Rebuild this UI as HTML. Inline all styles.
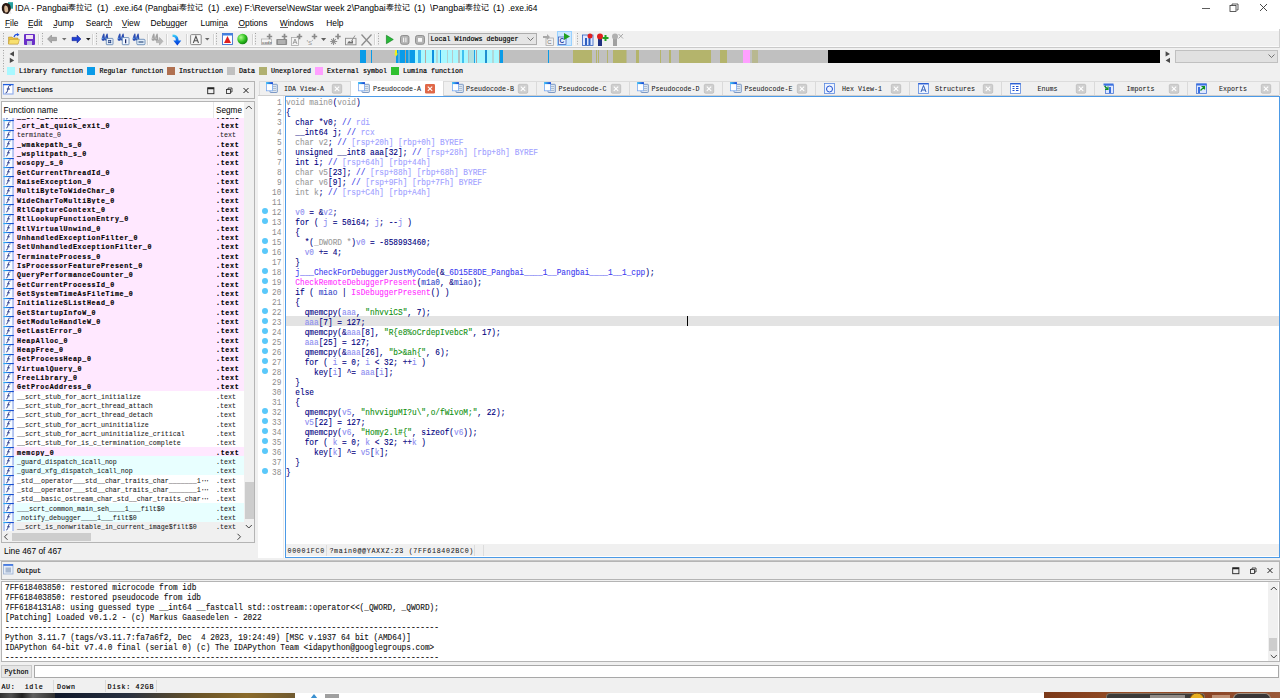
<!DOCTYPE html><html><head><meta charset="utf-8"><style>
*{box-sizing:border-box;margin:0;padding:0}
html,body{width:1280px;height:698px;overflow:hidden;background:#f0f0f0}
#root{position:relative;width:1280px;height:698px;overflow:hidden;background:#f0f0f0;font-family:"Liberation Sans",sans-serif}
.a{position:absolute}
.t{position:absolute;white-space:pre;line-height:1}
.bm{font-family:"Liberation Mono",monospace;font-size:6.67px;font-weight:bold;color:#000;-webkit-text-stroke:0.15px #000}
.rg{font-weight:normal;color:#000;-webkit-text-stroke:0.18px #000}
.rl{font-weight:normal;color:#1a1a1a;-webkit-text-stroke:0.05px #000}
.cd{font-family:"Liberation Mono",monospace;font-size:9.3px;transform:scaleX(0.8363);transform-origin:0 0;-webkit-text-stroke:0.12px currentColor}
svg{position:absolute;overflow:visible}
</style></head><body><div id="root"><div class="a" style="left:0px;top:0px;width:1280px;height:30.5px;background:#fff"></div>
<svg style="left:1px;top:1.8px" width="12" height="12" viewBox="0 0 12 12"><rect x="7" y="0.2" width="5" height="6.5" fill="#28a0a0"/><path d="M4.5 1 Q8.5 0.8 9.5 4 Q10.5 7 9 9.5 L10 11.5 L6 12 L2.5 11 Q0.3 8.5 0.8 5 Q1.5 1.5 4.5 1Z" fill="#2a1a14"/><path d="M4 3.5 Q6.5 3 7 6 L7.2 9 Q6 11 4.5 10.5 Q3 9 3.2 6 Q3.2 4 4 3.5Z" fill="#d8b898"/><path d="M7 12 L9 9 L11 12Z" fill="#f0f0f0"/></svg>
<div class="t" style="left:15.299999999999999px;top:3.8px;font-family:Liberation Sans;font-size:9px;color:#000;transform:scaleX(0.9595);transform-origin:0 0">IDA - Pangbai</div>
<div class="t" style="left:113.10000000000001px;top:3.8px;font-family:Liberation Sans;font-size:9px;color:#000;transform:scaleX(0.9377);transform-origin:0 0">.exe.i64 (Pangbai</div>
<div class="t" style="left:223.2px;top:3.8px;font-family:Liberation Sans;font-size:9px;color:#000;transform:scaleX(0.9560);transform-origin:0 0">.exe) F:\Reverse\NewStar week 2\Pangbai</div>
<div class="t" style="left:429.7px;top:3.8px;font-family:Liberation Sans;font-size:9px;color:#000;transform:scaleX(0.9879);transform-origin:0 0">\Pangbai</div>
<div class="t" style="left:508.45px;top:3.8px;font-family:Liberation Sans;font-size:9px;color:#000;transform:scaleX(0.9340);transform-origin:0 0">.exe.i64</div>
<div class="a" style="left:68.4px;top:2.6px;width:24.4px;height:11px;overflow:hidden"><div class="t" style="left:0;top:1.2px;font-size:8.1px;color:#000;letter-spacing:0">泰拉记</div></div>
<div class="a" style="left:178.8px;top:2.6px;width:24.4px;height:11px;overflow:hidden"><div class="t" style="left:0;top:1.2px;font-size:8.1px;color:#000;letter-spacing:0">泰拉记</div></div>
<div class="a" style="left:386px;top:2.6px;width:24.4px;height:11px;overflow:hidden"><div class="t" style="left:0;top:1.2px;font-size:8.1px;color:#000;letter-spacing:0">泰拉记</div></div>
<div class="a" style="left:464.6px;top:2.6px;width:24.4px;height:11px;overflow:hidden"><div class="t" style="left:0;top:1.2px;font-size:8.1px;color:#000;letter-spacing:0">泰拉记</div></div>
<div class="t" style="left:97.1px;top:3.8px;font-family:Liberation Sans;font-size:9px;color:#000;transform:scaleX(1.0364);transform-origin:0 0">(1)</div>
<div class="t" style="left:207.5px;top:3.8px;font-family:Liberation Sans;font-size:9px;color:#000;transform:scaleX(1.0364);transform-origin:0 0">(1)</div>
<div class="t" style="left:413.8px;top:3.8px;font-family:Liberation Sans;font-size:9px;color:#000;transform:scaleX(1.0364);transform-origin:0 0">(1)</div>
<div class="t" style="left:492.90000000000003px;top:3.8px;font-family:Liberation Sans;font-size:9px;color:#000;transform:scaleX(1.0364);transform-origin:0 0">(1)</div>
<svg style="left:1200px;top:2px" width="80" height="12"><line x1="2" y1="6.5" x2="10" y2="6.5" stroke="#333" stroke-width="0.8"/><rect x="30" y="3.5" width="6" height="6" fill="none" stroke="#333" stroke-width="0.8"/><path d="M32 3.5 V2 H38 V8 H36.5" fill="none" stroke="#333" stroke-width="0.8"/><path d="M60 2 L67 9 M67 2 L60 9" stroke="#333" stroke-width="0.9"/></svg>
<div class="t" style="left:5px;top:19.0px;font-size:8.4px;color:#000">File</div>
<div class="t" style="left:28px;top:19.0px;font-size:8.4px;color:#000">Edit</div>
<div class="t" style="left:53.5px;top:19.0px;font-size:8.4px;color:#000">Jump</div>
<div class="t" style="left:85.8px;top:19.0px;font-size:8.4px;color:#000">Search</div>
<div class="t" style="left:121.8px;top:19.0px;font-size:8.4px;color:#000">View</div>
<div class="t" style="left:150.5px;top:19.0px;font-size:8.4px;color:#000">Debugger</div>
<div class="t" style="left:200.5px;top:19.0px;font-size:8.4px;color:#000">Lumina</div>
<div class="t" style="left:238.5px;top:19.0px;font-size:8.4px;color:#000">Options</div>
<div class="t" style="left:279.8px;top:19.0px;font-size:8.4px;color:#000">Windows</div>
<div class="t" style="left:326.2px;top:19.0px;font-size:8.4px;color:#000">Help</div>
<div class="a" style="left:5px;top:27.2px;width:4.5px;height:0.9px;background:#666"></div>
<div class="a" style="left:28px;top:27.2px;width:5px;height:0.9px;background:#666"></div>
<div class="a" style="left:53px;top:27.2px;width:4px;height:0.9px;background:#666"></div>
<div class="a" style="left:106px;top:27.2px;width:5px;height:0.9px;background:#666"></div>
<div class="a" style="left:121.8px;top:27.2px;width:5.200000000000003px;height:0.9px;background:#666"></div>
<div class="a" style="left:166.2px;top:27.2px;width:4.800000000000011px;height:0.9px;background:#666"></div>
<div class="a" style="left:218.7px;top:27.2px;width:4.900000000000006px;height:0.9px;background:#666"></div>
<div class="a" style="left:238.4px;top:27.2px;width:6.199999999999989px;height:0.9px;background:#666"></div>
<div class="a" style="left:280px;top:27.2px;width:7.5px;height:0.9px;background:#666"></div>
<div class="a" style="left:0px;top:46.3px;width:1280px;height:1px;background:#fafafa"></div>
<div class="a" style="left:0px;top:47.2px;width:1280px;height:1px;background:#cacaca"></div>
<div class="a" style="left:1279px;top:29px;width:1px;height:19px;background:#d0d0d0"></div>
<svg style="left:3px;top:33px" width="2" height="13"><rect x="0" y="0.0" width="1" height="1" fill="#a0a0a0"/><rect x="0" y="2.6" width="1" height="1" fill="#a0a0a0"/><rect x="0" y="5.2" width="1" height="1" fill="#a0a0a0"/><rect x="0" y="7.800000000000001" width="1" height="1" fill="#a0a0a0"/><rect x="0" y="10.4" width="1" height="1" fill="#a0a0a0"/></svg>
<svg style="left:8px;top:33px" width="12" height="12" viewBox="0 0 12 12"><path d="M0.5 4 H4 L5 5 H10 V11 H0.5Z" fill="#e8c040" stroke="#b08820" stroke-width="0.5"/><path d="M1.5 6.5 H11.5 L10 11 H0.5Z" fill="#f8e070" stroke="#c09830" stroke-width="0.5"/><path d="M6 4 Q7 1 10 1.5" stroke="#2050e0" stroke-width="1.2" fill="none"/><path d="M9 0 L11.5 1.7 L9 3.3Z" fill="#2050e0"/></svg>
<svg style="left:24px;top:34px" width="11" height="11" viewBox="0 0 11 11"><rect x="0" y="0" width="11" height="11" rx="1" fill="#6a30c8"/><rect x="2" y="1" width="7" height="4" fill="#f0e0f0"/><rect x="3" y="7" width="5" height="4" fill="#c0c0e0"/></svg>
<div class="a" style="left:38px;top:33.5px;width:0.9px;height:11.5px;background:#d4d4d4"></div>
<div class="a" style="left:38.9px;top:33.5px;width:0.7px;height:11.5px;background:#fbfbfb"></div>
<svg style="left:42px;top:33px" width="2" height="13"><rect x="0" y="0.0" width="1" height="1" fill="#a0a0a0"/><rect x="0" y="2.6" width="1" height="1" fill="#a0a0a0"/><rect x="0" y="5.2" width="1" height="1" fill="#a0a0a0"/><rect x="0" y="7.800000000000001" width="1" height="1" fill="#a0a0a0"/><rect x="0" y="10.4" width="1" height="1" fill="#a0a0a0"/></svg>
<svg style="left:47px;top:34px" width="10" height="10" viewBox="0 0 10 10"><path d="M0.5 5 L4.5 1 V3.3 H9.5 V6.7 H4.5 V9Z" fill="#a8a8a8" stroke="#808080" stroke-width="0.5"/></svg>
<svg style="left:62px;top:38px" width="5" height="3"><path d="M0 0 H4.5 L2.25 2.6Z" fill="#707070"/></svg>
<svg style="left:71px;top:34px" width="11" height="10" viewBox="0 0 10 10"><path d="M9.5 5 L5.5 1 V3.3 H0.5 V6.7 H5.5 V9Z" fill="#2040d0" stroke="#102090" stroke-width="0.5"/></svg>
<svg style="left:86px;top:38px" width="5" height="3"><path d="M0 0 H4.5 L2.25 2.6Z" fill="#202020"/></svg>
<div class="a" style="left:92px;top:33.5px;width:0.9px;height:11.5px;background:#d4d4d4"></div>
<div class="a" style="left:92.9px;top:33.5px;width:0.7px;height:11.5px;background:#fbfbfb"></div>
<svg style="left:96px;top:33px" width="2" height="13"><rect x="0" y="0.0" width="1" height="1" fill="#a0a0a0"/><rect x="0" y="2.6" width="1" height="1" fill="#a0a0a0"/><rect x="0" y="5.2" width="1" height="1" fill="#a0a0a0"/><rect x="0" y="7.800000000000001" width="1" height="1" fill="#a0a0a0"/><rect x="0" y="10.4" width="1" height="1" fill="#a0a0a0"/></svg>
<svg style="left:101px;top:33px" width="13" height="13" viewBox="0 0 13 13"><path d="M2.6 0.6 C1.6 2 0.6 5 0.6 6.2 C0.6 7.3 1.5 7.8 2.4 7.8 C3.4 7.8 4 7 4 6 L3.4 0.8Z" fill="#2a4cb0"/><circle cx="1.8" cy="5.2" r="0.8" fill="#60a0f0"/><path d="M5.9 0.6 C4.9 2 3.9 5 3.9 6.2 C3.9 7.3 4.8 7.8 5.699999999999999 7.8 C6.699999999999999 7.8 7.3 7 7.3 6 L6.699999999999999 0.8Z" fill="#2a4cb0"/><circle cx="5.1" cy="5.2" r="0.8" fill="#60a0f0"/><rect x="5.3" y="5.4" width="6.7" height="6.3" rx="0.6" fill="#e8f0fa" stroke="#5a80b0" stroke-width="0.8"/><path d="M7.2 7.6 h3 M7.2 9.5 h3 M7.8 7 v3.2 M9.6 7 v3.2" stroke="#203e80" stroke-width="0.8"/></svg>
<svg style="left:117px;top:33px" width="13" height="13" viewBox="0 0 13 13"><path d="M2.6 0.6 C1.6 2 0.6 5 0.6 6.2 C0.6 7.3 1.5 7.8 2.4 7.8 C3.4 7.8 4 7 4 6 L3.4 0.8Z" fill="#2a4cb0"/><circle cx="1.8" cy="5.2" r="0.8" fill="#60a0f0"/><path d="M5.9 0.6 C4.9 2 3.9 5 3.9 6.2 C3.9 7.3 4.8 7.8 5.699999999999999 7.8 C6.699999999999999 7.8 7.3 7 7.3 6 L6.699999999999999 0.8Z" fill="#2a4cb0"/><circle cx="5.1" cy="5.2" r="0.8" fill="#60a0f0"/><rect x="5.3" y="4.6" width="6.7" height="7.1" rx="0.6" fill="#f4f8ff" stroke="#5a80b0" stroke-width="0.8"/><path d="M8.65 6.3 v4" stroke="#102060" stroke-width="1.2"/></svg>
<svg style="left:132px;top:33px" width="13" height="13" viewBox="0 0 13 13"><path d="M2.6 0.6 C1.6 2 0.6 5 0.6 6.2 C0.6 7.3 1.5 7.8 2.4 7.8 C3.4 7.8 4 7 4 6 L3.4 0.8Z" fill="#2a4cb0"/><circle cx="1.8" cy="5.2" r="0.8" fill="#60a0f0"/><path d="M5.9 0.6 C4.9 2 3.9 5 3.9 6.2 C3.9 7.3 4.8 7.8 5.699999999999999 7.8 C6.699999999999999 7.8 7.3 7 7.3 6 L6.699999999999999 0.8Z" fill="#2a4cb0"/><circle cx="5.1" cy="5.2" r="0.8" fill="#60a0f0"/><rect x="4.8" y="6.3" width="8.2" height="5.4" rx="1" fill="#e0ecf8" stroke="#5a80b0" stroke-width="0.8"/><path d="M6.5 9 h5" stroke="#305080" stroke-width="1.2"/></svg>
<div class="a" style="left:147px;top:33.5px;width:0.9px;height:11.5px;background:#d4d4d4"></div>
<div class="a" style="left:147.9px;top:33.5px;width:0.7px;height:11.5px;background:#fbfbfb"></div>
<svg style="left:151px;top:33px" width="13" height="13" viewBox="0 0 13 13"><path d="M2.6 0.6 C1.6 2 0.6 5 0.6 6.2 C0.6 7.3 1.5 7.8 2.4 7.8 C3.4 7.8 4 7 4 6 L3.4 0.8Z" fill="#a0a0a0"/><circle cx="1.8" cy="5.2" r="0.8" fill="#c8c8c8"/><path d="M5.9 0.6 C4.9 2 3.9 5 3.9 6.2 C3.9 7.3 4.8 7.8 5.699999999999999 7.8 C6.699999999999999 7.8 7.3 7 7.3 6 L6.699999999999999 0.8Z" fill="#a0a0a0"/><circle cx="5.1" cy="5.2" r="0.8" fill="#c8c8c8"/><path d="M5.5 7 h3 v-2.5 l3.5 3.8 l-3.5 3.8 v-2.5 h-3z" fill="#b8b8b8" stroke="#9a9a9a" stroke-width="0.5"/></svg>
<div class="a" style="left:166px;top:33.5px;width:0.9px;height:11.5px;background:#d4d4d4"></div>
<div class="a" style="left:166.9px;top:33.5px;width:0.7px;height:11.5px;background:#fbfbfb"></div>
<svg style="left:171.5px;top:33.5px" width="10" height="12" viewBox="0 0 10 12"><defs><linearGradient id="dg" x1="0" y1="0" x2="0" y2="1"><stop offset="0" stop-color="#40d8f8"/><stop offset="0.5" stop-color="#1070f0"/><stop offset="1" stop-color="#0030d0"/></linearGradient></defs><path d="M0.5 0.5 Q6 0.5 6.5 5.5 L6.5 6.5 H9.3 L5.3 11.5 L1.3 6.5 H3.8 V5.8 Q3.6 3 0.5 2.8Z" fill="url(#dg)"/></svg>
<div class="a" style="left:186px;top:33.5px;width:0.9px;height:11.5px;background:#d4d4d4"></div>
<div class="a" style="left:186.9px;top:33.5px;width:0.7px;height:11.5px;background:#fbfbfb"></div>
<svg style="left:190px;top:33.8px" width="20" height="11" viewBox="0 0 20 11"><rect x="0.6" y="0.6" width="10.6" height="10" rx="1" fill="#f6f6f6" stroke="#8a8a8a" stroke-width="1"/><path d="M3.3 9 L5.9 2.3 L8.5 9 M4.3 6.7 H7.5" stroke="#555" stroke-width="1.1" fill="none"/><path d="M15 4 H19.5 L17.25 6.6Z" fill="#666"/></svg>
<div class="a" style="left:213px;top:33.5px;width:0.9px;height:11.5px;background:#d4d4d4"></div>
<div class="a" style="left:213.9px;top:33.5px;width:0.7px;height:11.5px;background:#fbfbfb"></div>
<svg style="left:216px;top:33px" width="2" height="13"><rect x="0" y="0.0" width="1" height="1" fill="#a0a0a0"/><rect x="0" y="2.6" width="1" height="1" fill="#a0a0a0"/><rect x="0" y="5.2" width="1" height="1" fill="#a0a0a0"/><rect x="0" y="7.800000000000001" width="1" height="1" fill="#a0a0a0"/><rect x="0" y="10.4" width="1" height="1" fill="#a0a0a0"/></svg>
<svg style="left:222px;top:33px" width="11" height="12" viewBox="0 0 11 12"><rect x="0.5" y="0.5" width="10" height="11" fill="#fff" stroke="#4070d0" stroke-width="0.9"/><rect x="0.5" y="0.5" width="10" height="2" fill="#4080e0"/><path d="M2 10 L5.5 3 L9 10Z" fill="#e02020"/></svg>
<svg style="left:237px;top:33px" width="11" height="12" viewBox="0 0 11 12"><defs><radialGradient id="gg" cx="0.35" cy="0.35" r="0.7"><stop offset="0" stop-color="#b0ff90"/><stop offset="0.6" stop-color="#30c020"/><stop offset="1" stop-color="#108010"/></radialGradient></defs><circle cx="5.5" cy="6" r="5.2" fill="url(#gg)"/></svg>
<div class="a" style="left:252px;top:33.5px;width:0.9px;height:11.5px;background:#d4d4d4"></div>
<div class="a" style="left:252.9px;top:33.5px;width:0.7px;height:11.5px;background:#fbfbfb"></div>
<svg style="left:255px;top:33px" width="2" height="13"><rect x="0" y="0.0" width="1" height="1" fill="#a0a0a0"/><rect x="0" y="2.6" width="1" height="1" fill="#a0a0a0"/><rect x="0" y="5.2" width="1" height="1" fill="#a0a0a0"/><rect x="0" y="7.800000000000001" width="1" height="1" fill="#a0a0a0"/><rect x="0" y="10.4" width="1" height="1" fill="#a0a0a0"/></svg>
<svg style="left:260.5px;top:33px" width="12" height="13" viewBox="0 0 12 13"><rect x="0.5" y="6" width="10" height="5.5" fill="#f4f4f4" stroke="#a8a8a8" stroke-width="0.7"/><text x="1" y="10.6" font-size="4.2" font-family="Liberation Mono" font-weight="bold" fill="#707070">code</text><path d="M8.5 0.8 v5.4 M5.8 3.5 h5.4" stroke="#8a8a8a" stroke-width="1.7"/></svg>
<svg style="left:275.5px;top:33px" width="12" height="13" viewBox="0 0 12 13"><rect x="0.3" y="6" width="10.8" height="6" rx="0.8" fill="#8c8c8c"/><path d="M2 8 h7.5 M2 10 h7.5" stroke="#e8e8e8" stroke-width="0.8"/><path d="M8.5 0.8 v5.4 M5.8 3.5 h5.4" stroke="#8a8a8a" stroke-width="1.7"/></svg>
<svg style="left:291px;top:33px" width="12" height="13" viewBox="0 0 12 13"><rect x="0.5" y="4.5" width="7" height="8" fill="#f4f4f4" stroke="#a0a0a0" stroke-width="0.7"/><path d="M2 11 L4 6 L6 11 M2.8 9.3 H5.2" stroke="#808080" stroke-width="0.7" fill="none"/><path d="M8.5 0.8 v5.4 M5.8 3.5 h5.4" stroke="#8a8a8a" stroke-width="1.7"/></svg>
<svg style="left:306px;top:33px" width="12" height="13" viewBox="0 0 12 13"><text x="2" y="11.5" font-size="6" font-family="Liberation Sans" fill="#909090">S</text><circle cx="1.3" cy="7.8" r="0.6" fill="#909090"/><circle cx="6.3" cy="7.3" r="0.5" fill="#909090"/><path d="M8.5 0.8 v5.4 M5.8 3.5 h5.4" stroke="#8a8a8a" stroke-width="1.7"/></svg>
<svg style="left:321px;top:38px" width="6" height="4"><path d="M0 0 H5.2 L2.6 3Z" fill="#606060"/></svg>
<svg style="left:330px;top:33px" width="12" height="13" viewBox="0 0 12 13"><path d="M3.5 5 v7 M0.2 8.5 h7 M1.2 6.2 L5.8 10.8 M5.8 6.2 L1.2 10.8" stroke="#909090" stroke-width="1.1"/><path d="M8 0.8 v5.4 M5.3 3.5 h5.4" stroke="#8a8a8a" stroke-width="1.7"/></svg>
<svg style="left:345px;top:33px" width="12" height="13" viewBox="0 0 12 13"><rect x="0.5" y="5.3" width="10.5" height="6.5" fill="#f0f0f0" stroke="#8a8a8a" stroke-width="0.9"/><path d="M2 10.5 L4 8 L6 9 L8 7 V10.5Z" fill="#707070"/><path d="M6.5 8 L10 2.5" stroke="#909090" stroke-width="1"/></svg>
<svg style="left:361px;top:33.5px" width="11" height="12" viewBox="0 0 11 12"><path d="M0.5 0.5 L10.5 11.5 M10.5 0.5 L0.5 11.5" stroke="#8c8c8c" stroke-width="1.3"/></svg>
<div class="a" style="left:374px;top:33.5px;width:0.9px;height:11.5px;background:#d4d4d4"></div>
<div class="a" style="left:374.9px;top:33.5px;width:0.7px;height:11.5px;background:#fbfbfb"></div>
<svg style="left:378px;top:33px" width="2" height="13"><rect x="0" y="0.0" width="1" height="1" fill="#a0a0a0"/><rect x="0" y="2.6" width="1" height="1" fill="#a0a0a0"/><rect x="0" y="5.2" width="1" height="1" fill="#a0a0a0"/><rect x="0" y="7.800000000000001" width="1" height="1" fill="#a0a0a0"/><rect x="0" y="10.4" width="1" height="1" fill="#a0a0a0"/></svg>
<svg style="left:385.8px;top:35.2px" width="8" height="9" viewBox="0 0 8 9"><path d="M0.4 0.3 L7.3 4.5 L0.4 8.7Z" fill="#28b838" stroke="#0a7a1a" stroke-width="0.6"/></svg>
<svg style="left:400px;top:34.5px" width="9.5" height="9.8" viewBox="0 0 9.5 9.8"><rect x="0.5" y="0.5" width="8.5" height="8.8" rx="2" fill="#b4b4b4" stroke="#808080" stroke-width="0.8"/><path d="M3.6 2.6 v4.6 M5.9 2.6 v4.6" stroke="#fafafa" stroke-width="1"/></svg>
<svg style="left:415px;top:34.5px" width="10" height="9.8" viewBox="0 0 10 9.8"><rect x="0.5" y="0.5" width="9" height="8.8" rx="2" fill="#b4b4b4" stroke="#808080" stroke-width="0.8"/><rect x="3" y="3" width="4" height="3.8" fill="#fafafa"/></svg>
<div class="a" style="left:428.2px;top:32.8px;width:108.6px;height:12.7px;background:#e5e5e5;border:1px solid #adadad"></div>
<div class="t bm rg" style="left:430.5px;top:36.2px;">Local Windows debugger</div>
<svg style="left:527px;top:37px" width="8" height="5"><path d="M0.5 0.5 L3.5 3.5 L6.5 0.5" stroke="#555" stroke-width="0.8" fill="none"/></svg>
<svg style="left:542px;top:33px" width="12" height="13" viewBox="0 0 12 13"><rect x="4" y="5" width="7.5" height="7.5" fill="#f0f0f0" stroke="#a0a0a0" stroke-width="0.7"/><text x="5.3" y="11" font-size="6" font-family="Liberation Sans" fill="#707070">C</text><path d="M1 3 h4 v-2 l3 3 l-3 3 v-2 h-4z" fill="#a8a8a8"/></svg>
<div class="a" style="left:556.6px;top:31px;width:15.4px;height:15px;background:#cce8ff;border:1px solid #99d1ff"></div>
<svg style="left:558px;top:32px" width="13" height="13" viewBox="0 0 13 13"><rect x="0.5" y="5" width="7.5" height="7.5" fill="#e8f0ff" stroke="#3050b0" stroke-width="0.7"/><text x="1.6" y="11.2" font-size="6.5" font-weight="bold" font-family="Liberation Sans" fill="#2040a0">C</text><path d="M6 1 L12 4.5 L6 8Z" fill="#20a020"/></svg>
<div class="a" style="left:573.5px;top:33.5px;width:0.9px;height:11.5px;background:#d4d4d4"></div>
<div class="a" style="left:574.4px;top:33.5px;width:0.7px;height:11.5px;background:#fbfbfb"></div>
<svg style="left:577px;top:33px" width="2" height="13"><rect x="0" y="0.0" width="1" height="1" fill="#a0a0a0"/><rect x="0" y="2.6" width="1" height="1" fill="#a0a0a0"/><rect x="0" y="5.2" width="1" height="1" fill="#a0a0a0"/><rect x="0" y="7.800000000000001" width="1" height="1" fill="#a0a0a0"/><rect x="0" y="10.4" width="1" height="1" fill="#a0a0a0"/></svg>
<svg style="left:582px;top:33px" width="12" height="13" viewBox="0 0 12 13"><rect x="0.5" y="2" width="10.5" height="10.5" fill="#dfe8ff" stroke="#3060c0" stroke-width="0.8"/><rect x="3" y="5" width="2" height="7" fill="#3060c0"/><rect x="6.5" y="5" width="2" height="7" fill="#3060c0"/><circle cx="8" cy="3" r="2.5" fill="#e02020"/></svg>
<svg style="left:597px;top:33px" width="12" height="13" viewBox="0 0 12 13"><rect x="1" y="4" width="4" height="9" fill="#203080"/><circle cx="3" cy="3.5" r="3" fill="#e02020"/><path d="M8.5 2 v6 M5.5 5 h6" stroke="#20a020" stroke-width="2"/></svg>
<svg style="left:612px;top:33px" width="12" height="13" viewBox="0 0 12 13"><rect x="1" y="4" width="4" height="9" fill="#a0a0a0"/><circle cx="3" cy="3.5" r="3" fill="#b0b0b0"/><path d="M6.5 1 L11 5.5 M11 1 L6.5 5.5" stroke="#a0a0a0" stroke-width="0.9"/></svg>
<svg style="left:3px;top:50px" width="2" height="24"><rect x="0" y="0.0" width="1" height="1" fill="#a0a0a0"/><rect x="0" y="2.6" width="1" height="1" fill="#a0a0a0"/><rect x="0" y="5.2" width="1" height="1" fill="#a0a0a0"/><rect x="0" y="7.800000000000001" width="1" height="1" fill="#a0a0a0"/><rect x="0" y="10.4" width="1" height="1" fill="#a0a0a0"/><rect x="0" y="13.0" width="1" height="1" fill="#a0a0a0"/><rect x="0" y="15.600000000000001" width="1" height="1" fill="#a0a0a0"/><rect x="0" y="18.2" width="1" height="1" fill="#a0a0a0"/><rect x="0" y="20.8" width="1" height="1" fill="#a0a0a0"/></svg>
<svg style="left:9px;top:51px" width="6" height="13"><path d="M5 0.3 V5.5 L0.6 2.9Z M0.8 6.8 V12 L5.2 9.4Z" fill="#4a4a4a"/></svg>
<div class="a" style="left:18px;top:50px;width:810px;height:13px;background:#c0c0c0"></div>
<div class="a" style="left:360px;top:50px;width:5.5px;height:13px;background:#0a9be8"></div>
<div class="a" style="left:370.8px;top:50px;width:1.2px;height:13px;background:#0a9be8"></div>
<div class="a" style="left:395.6px;top:50px;width:2.4px;height:13px;background:#0a9be8"></div>
<div class="a" style="left:398px;top:50px;width:2px;height:13px;background:#50b0e0"></div>
<div class="a" style="left:400px;top:50px;width:5px;height:13px;background:#0a9be8"></div>
<div class="a" style="left:405px;top:50px;width:1px;height:13px;background:#b0a090"></div>
<div class="a" style="left:406px;top:50px;width:2px;height:13px;background:#0a9be8"></div>
<div class="a" style="left:408px;top:50px;width:2px;height:13px;background:#50b0e0"></div>
<div class="a" style="left:410px;top:50px;width:5px;height:13px;background:#0a9be8"></div>
<div class="a" style="left:415px;top:50px;width:2.6px;height:13px;background:#a8f8ff"></div>
<div class="a" style="left:417.6px;top:50px;width:3.4px;height:13px;background:#40b8f0"></div>
<div class="a" style="left:421px;top:50px;width:4px;height:13px;background:#a8f8ff"></div>
<div class="a" style="left:425px;top:50px;width:1px;height:13px;background:#b8a8a0"></div>
<div class="a" style="left:426px;top:50px;width:5.7px;height:13px;background:#a8f8ff"></div>
<div class="a" style="left:431.7px;top:50px;width:1.9px;height:13px;background:#1090e0"></div>
<div class="a" style="left:433.6px;top:50px;width:2.4px;height:13px;background:#a8f8ff"></div>
<div class="a" style="left:436px;top:50px;width:2px;height:13px;background:#b0d8d8"></div>
<div class="a" style="left:438px;top:50px;width:1.7px;height:13px;background:#a8f8ff"></div>
<div class="a" style="left:439.7px;top:50px;width:1.3px;height:13px;background:#20a0e8"></div>
<div class="a" style="left:441px;top:50px;width:5.7px;height:13px;background:#a8f8ff"></div>
<div class="a" style="left:446.7px;top:50px;width:1.3px;height:13px;background:#b0d0d0"></div>
<div class="a" style="left:448px;top:50px;width:4px;height:13px;background:#a8f8ff"></div>
<div class="a" style="left:452px;top:50px;width:1.3px;height:13px;background:#b8c8c8"></div>
<div class="a" style="left:453.3px;top:50px;width:4.7px;height:13px;background:#a8f8ff"></div>
<div class="a" style="left:458px;top:50px;width:1.5px;height:13px;background:#b0c0c0"></div>
<div class="a" style="left:459.5px;top:50px;width:2.5px;height:13px;background:#a8f8ff"></div>
<div class="a" style="left:462px;top:50px;width:2px;height:13px;background:#40c0f0"></div>
<div class="a" style="left:464px;top:50px;width:3.8px;height:13px;background:#a8f8ff"></div>
<div class="a" style="left:467.8px;top:50px;width:1.4px;height:13px;background:#b8c0c0"></div>
<div class="a" style="left:469.2px;top:50px;width:4.8px;height:13px;background:#b0e0e0"></div>
<div class="a" style="left:474px;top:50px;width:1px;height:13px;background:#20a0e8"></div>
<div class="a" style="left:475px;top:50px;width:1.2px;height:13px;background:#a8f8ff"></div>
<div class="a" style="left:476.2px;top:50px;width:1.0px;height:13px;background:#b0a0a0"></div>
<div class="a" style="left:477.2px;top:50px;width:7.8px;height:13px;background:#a8f8ff"></div>
<div class="a" style="left:485px;top:50px;width:2px;height:13px;background:#2090d0"></div>
<div class="a" style="left:487px;top:50px;width:5px;height:13px;background:#a8f8ff"></div>
<div class="a" style="left:492px;top:50px;width:2px;height:13px;background:#b0d8d8"></div>
<div class="a" style="left:494px;top:50px;width:5px;height:13px;background:#a8f8ff"></div>
<div class="a" style="left:499px;top:50px;width:1px;height:13px;background:#b09080"></div>
<div class="a" style="left:500px;top:50px;width:3px;height:13px;background:#0a9be8"></div>
<div class="a" style="left:547.7px;top:50px;width:1.3px;height:13px;background:#0a9be8"></div>
<div class="a" style="left:573.4px;top:50px;width:18.6px;height:13px;background:#b4b46c"></div>
<div class="a" style="left:595.6px;top:50px;width:1.4px;height:13px;background:#b4b46c"></div>
<div class="a" style="left:597.6px;top:50px;width:1.2px;height:13px;background:#b4b46c"></div>
<div class="a" style="left:607px;top:50px;width:1px;height:13px;background:#b4b46c"></div>
<div class="a" style="left:613px;top:50px;width:12.8px;height:13px;background:#b4b46c"></div>
<div class="a" style="left:625.8px;top:50px;width:1.7px;height:13px;background:#b8b898"></div>
<div class="a" style="left:636px;top:50px;width:3px;height:13px;background:#b4b46c"></div>
<div class="a" style="left:660px;top:50px;width:1.4px;height:13px;background:#b4b46c"></div>
<div class="a" style="left:668.75px;top:50px;width:2.25px;height:13px;background:#b4b46c"></div>
<div class="a" style="left:679px;top:50px;width:32px;height:13px;background:#b4b46c"></div>
<div class="a" style="left:720px;top:50px;width:7px;height:13px;background:#b4b46c"></div>
<div class="a" style="left:743px;top:50px;width:7px;height:13px;background:#ffa0ff"></div>
<div class="a" style="left:752px;top:50px;width:6px;height:13px;background:#b8b890"></div>
<div class="a" style="left:828px;top:50px;width:332px;height:13px;background:#000"></div>
<svg style="left:394px;top:50px" width="4" height="7"><path d="M1 0 h2 v3.5 h1 L2 6.5 L0 3.5 h1z" fill="#f0f020"/></svg>
<svg style="left:1165px;top:51px" width="6" height="13"><path d="M0.6 0.3 V5.5 L5 2.9Z M5 6.8 V12 L0.6 9.4Z" fill="#4a4a4a"/></svg>
<div class="a" style="left:1174.5px;top:50px;width:103.2px;height:13px;background:#e1e1e1;border:1px solid #c0c0c0"></div>
<svg style="left:1268px;top:54px" width="8" height="5"><path d="M0.5 0.5 L3.5 3.5 L6.5 0.5" stroke="#555" stroke-width="0.8" fill="none"/></svg>
<div class="a" style="left:7.3px;top:67px;width:8px;height:8px;background:#a8f8ff"></div>
<div class="t bm rg" style="left:19px;top:68.3px;">Library function</div>
<div class="a" style="left:87px;top:67px;width:8px;height:8px;background:#0a9be8"></div>
<div class="t bm rg" style="left:99.4px;top:68.3px;">Regular function</div>
<div class="a" style="left:167px;top:67px;width:8px;height:8px;background:#b07050"></div>
<div class="t bm rg" style="left:179px;top:68.3px;">Instruction</div>
<div class="a" style="left:227px;top:67px;width:8px;height:8px;background:#c0c0c0"></div>
<div class="t bm rg" style="left:239px;top:68.3px;">Data</div>
<div class="a" style="left:259px;top:67px;width:8px;height:8px;background:#b0b070"></div>
<div class="t bm rg" style="left:271px;top:68.3px;">Unexplored</div>
<div class="a" style="left:315px;top:67px;width:8px;height:8px;background:#ffa0ff"></div>
<div class="t bm rg" style="left:327px;top:68.3px;">External symbol</div>
<div class="a" style="left:391px;top:67px;width:8px;height:8px;background:#30c030"></div>
<div class="t bm rg" style="left:403px;top:68.3px;">Lumina function</div>
<div class="a" style="left:1px;top:80.5px;width:254px;height:18.5px;background:#f0f0f0;border:1px solid #b4b4b4;border-width:1px 1.5px 1.5px 1px"></div>
<svg style="left:2.5px;top:84px" width="10.5" height="10.5" viewBox="0 0 10.5 10.5"><rect x="0.5" y="0.5" width="9.5" height="9.5" fill="#fff" stroke="#94b0ee" stroke-width="1.2"/><path d="M0 0.6 H10.5" stroke="#1e5ee0" stroke-width="1.2"/><path d="M2.6 9 Q4 9.2 4.6 6.5 L5.6 2.5 Q6.2 1.3 7.8 1.6 M3.8 5 H7" stroke="#14287a" stroke-width="0.9" fill="none"/></svg>
<div class="t bm rg" style="left:17px;top:86.8px;">Functions</div>
<svg style="left:207px;top:87px" width="45" height="8"><rect x="0.7" y="0.7" width="6.2" height="6" fill="none" stroke="#222" stroke-width="0.9"/><path d="M0.7 1.6 H6.9" stroke="#222" stroke-width="1.3"/><rect x="19.5" y="2.5" width="4" height="4" fill="none" stroke="#222" stroke-width="0.8"/><path d="M21 2.5 V1 H25 V5 H23.5" fill="none" stroke="#222" stroke-width="0.8"/><path d="M36.5 1 L41.5 6 M41.5 1 L36.5 6" stroke="#222" stroke-width="1"/></svg>
<div class="a" style="left:1px;top:101px;width:254px;height:441.5px;background:#f0f0f0;border:1px solid #b4b4b4;border-width:1px 1.5px 1.5px 1px"></div>
<div class="a" style="left:2px;top:102px;width:241.8px;height:16.4px;background:#fff"></div>
<div class="a" style="left:212.9px;top:102px;width:0.8px;height:16.4px;background:#e8e8e8"></div>
<div class="t" style="left:3.6px;top:106.5px;font-size:8.2px;color:#000">Function name</div>
<div class="t" style="left:216px;top:106.5px;font-size:8.2px;color:#000">Segme</div>
<div class="a" style="left:243.8px;top:102px;width:10.2px;height:429px;background:#f0f0f0"></div>
<svg style="left:245px;top:105px" width="8" height="5"><path d="M0.8 4 L3.8 1 L6.8 4" stroke="#404040" stroke-width="1" fill="none"/></svg>
<svg style="left:245px;top:523.5px" width="8" height="5"><path d="M0.8 1 L3.8 4 L6.8 1" stroke="#404040" stroke-width="1" fill="none"/></svg>
<div class="a" style="left:244.5px;top:481.5px;width:9px;height:37.8px;background:#cdcdcd"></div>
<div class="a" style="left:2px;top:530.7px;width:241.8px;height:11.3px;background:#f0f0f0"></div>
<div class="a" style="left:12px;top:532.5px;width:79px;height:8px;background:#cdcdcd"></div>
<svg style="left:3px;top:533px" width="6" height="8"><path d="M4.5 0.8 L1.5 3.8 L4.5 6.8" stroke="#404040" stroke-width="1" fill="none"/></svg>
<svg style="left:235.5px;top:533px" width="6" height="8"><path d="M1.5 0.8 L4.5 3.8 L1.5 6.8" stroke="#404040" stroke-width="1" fill="none"/></svg>
<svg width="0" height="0" style="left:0;top:0"><defs><linearGradient id="ftop" x1="0" x2="1"><stop offset="0" stop-color="#30c8f8"/><stop offset="0.5" stop-color="#1860e0"/><stop offset="1" stop-color="#1040c8"/></linearGradient></defs></svg>
<div class="a" style="left:2px;top:118.4px;width:241.8px;height:412.3px;overflow:hidden">
<div class="a" style="left:12.3px;top:-7.23px;width:229.5px;height:9.38px;background:#ffe8ff"></div>
<svg style="left:0.5px;top:-7.23px" width="11" height="9.4" viewBox="0 0 11 9.4"><rect x="0.3" y="0" width="10.4" height="9.4" fill="#f6fbff"/><rect x="0.3" y="0" width="1.5" height="9.4" fill="#a4b8ee"/><rect x="9.3" y="0" width="1.5" height="9.4" fill="#a4b8ee"/><rect x="0.3" y="0" width="10.5" height="1.1" fill="url(#ftop)"/><path d="M3.2 8 Q4.3 8.3 4.9 6 L5.8 2.6 Q6.3 1.6 7.5 1.9 M4.1 4.8 H6.9" stroke="#1a2a80" stroke-width="0.8" fill="none"/></svg>
<div class="t bm" style="left:15px;top:-4.83px;letter-spacing:0.667px">__crt_atexit_0</div>
<div class="t bm" style="left:214px;top:-4.83px;letter-spacing:0.667px">.text</div>
<div class="a" style="left:12.3px;top:2.10px;width:229.5px;height:9.38px;background:#ffe8ff"></div>
<svg style="left:0.5px;top:2.10px" width="11" height="9.4" viewBox="0 0 11 9.4"><rect x="0.3" y="0" width="10.4" height="9.4" fill="#f6fbff"/><rect x="0.3" y="0" width="1.5" height="9.4" fill="#a4b8ee"/><rect x="9.3" y="0" width="1.5" height="9.4" fill="#a4b8ee"/><rect x="0.3" y="0" width="10.5" height="1.1" fill="url(#ftop)"/><path d="M3.2 8 Q4.3 8.3 4.9 6 L5.8 2.6 Q6.3 1.6 7.5 1.9 M4.1 4.8 H6.9" stroke="#1a2a80" stroke-width="0.8" fill="none"/></svg>
<div class="t bm" style="left:15px;top:4.50px;letter-spacing:0.667px">_crt_at_quick_exit_0</div>
<div class="t bm" style="left:214px;top:4.50px;letter-spacing:0.667px">.text</div>
<div class="a" style="left:12.3px;top:11.43px;width:229.5px;height:9.38px;background:#ffe8ff"></div>
<svg style="left:0.5px;top:11.43px" width="11" height="9.4" viewBox="0 0 11 9.4"><rect x="0.3" y="0" width="10.4" height="9.4" fill="#f6fbff"/><rect x="0.3" y="0" width="1.5" height="9.4" fill="#a4b8ee"/><rect x="9.3" y="0" width="1.5" height="9.4" fill="#a4b8ee"/><rect x="0.3" y="0" width="10.5" height="1.1" fill="url(#ftop)"/><path d="M3.2 8 Q4.3 8.3 4.9 6 L5.8 2.6 Q6.3 1.6 7.5 1.9 M4.1 4.8 H6.9" stroke="#1a2a80" stroke-width="0.8" fill="none"/></svg>
<div class="t bm rl" style="left:15px;top:13.83px;">terminate_0</div>
<div class="t bm rl" style="left:214px;top:13.83px;">.text</div>
<div class="a" style="left:12.3px;top:20.77px;width:229.5px;height:9.38px;background:#ffe8ff"></div>
<svg style="left:0.5px;top:20.77px" width="11" height="9.4" viewBox="0 0 11 9.4"><rect x="0.3" y="0" width="10.4" height="9.4" fill="#f6fbff"/><rect x="0.3" y="0" width="1.5" height="9.4" fill="#a4b8ee"/><rect x="9.3" y="0" width="1.5" height="9.4" fill="#a4b8ee"/><rect x="0.3" y="0" width="10.5" height="1.1" fill="url(#ftop)"/><path d="M3.2 8 Q4.3 8.3 4.9 6 L5.8 2.6 Q6.3 1.6 7.5 1.9 M4.1 4.8 H6.9" stroke="#1a2a80" stroke-width="0.8" fill="none"/></svg>
<div class="t bm" style="left:15px;top:23.17px;letter-spacing:0.667px">_wmakepath_s_0</div>
<div class="t bm" style="left:214px;top:23.17px;letter-spacing:0.667px">.text</div>
<div class="a" style="left:12.3px;top:30.10px;width:229.5px;height:9.38px;background:#ffe8ff"></div>
<svg style="left:0.5px;top:30.10px" width="11" height="9.4" viewBox="0 0 11 9.4"><rect x="0.3" y="0" width="10.4" height="9.4" fill="#f6fbff"/><rect x="0.3" y="0" width="1.5" height="9.4" fill="#a4b8ee"/><rect x="9.3" y="0" width="1.5" height="9.4" fill="#a4b8ee"/><rect x="0.3" y="0" width="10.5" height="1.1" fill="url(#ftop)"/><path d="M3.2 8 Q4.3 8.3 4.9 6 L5.8 2.6 Q6.3 1.6 7.5 1.9 M4.1 4.8 H6.9" stroke="#1a2a80" stroke-width="0.8" fill="none"/></svg>
<div class="t bm" style="left:15px;top:32.50px;letter-spacing:0.667px">_wsplitpath_s_0</div>
<div class="t bm" style="left:214px;top:32.50px;letter-spacing:0.667px">.text</div>
<div class="a" style="left:12.3px;top:39.43px;width:229.5px;height:9.38px;background:#ffe8ff"></div>
<svg style="left:0.5px;top:39.43px" width="11" height="9.4" viewBox="0 0 11 9.4"><rect x="0.3" y="0" width="10.4" height="9.4" fill="#f6fbff"/><rect x="0.3" y="0" width="1.5" height="9.4" fill="#a4b8ee"/><rect x="9.3" y="0" width="1.5" height="9.4" fill="#a4b8ee"/><rect x="0.3" y="0" width="10.5" height="1.1" fill="url(#ftop)"/><path d="M3.2 8 Q4.3 8.3 4.9 6 L5.8 2.6 Q6.3 1.6 7.5 1.9 M4.1 4.8 H6.9" stroke="#1a2a80" stroke-width="0.8" fill="none"/></svg>
<div class="t bm" style="left:15px;top:41.83px;letter-spacing:0.667px">wcscpy_s_0</div>
<div class="t bm" style="left:214px;top:41.83px;letter-spacing:0.667px">.text</div>
<div class="a" style="left:12.3px;top:48.77px;width:229.5px;height:9.38px;background:#ffe8ff"></div>
<svg style="left:0.5px;top:48.77px" width="11" height="9.4" viewBox="0 0 11 9.4"><rect x="0.3" y="0" width="10.4" height="9.4" fill="#f6fbff"/><rect x="0.3" y="0" width="1.5" height="9.4" fill="#a4b8ee"/><rect x="9.3" y="0" width="1.5" height="9.4" fill="#a4b8ee"/><rect x="0.3" y="0" width="10.5" height="1.1" fill="url(#ftop)"/><path d="M3.2 8 Q4.3 8.3 4.9 6 L5.8 2.6 Q6.3 1.6 7.5 1.9 M4.1 4.8 H6.9" stroke="#1a2a80" stroke-width="0.8" fill="none"/></svg>
<div class="t bm" style="left:15px;top:51.17px;letter-spacing:0.667px">GetCurrentThreadId_0</div>
<div class="t bm" style="left:214px;top:51.17px;letter-spacing:0.667px">.text</div>
<div class="a" style="left:12.3px;top:58.10px;width:229.5px;height:9.38px;background:#ffe8ff"></div>
<svg style="left:0.5px;top:58.10px" width="11" height="9.4" viewBox="0 0 11 9.4"><rect x="0.3" y="0" width="10.4" height="9.4" fill="#f6fbff"/><rect x="0.3" y="0" width="1.5" height="9.4" fill="#a4b8ee"/><rect x="9.3" y="0" width="1.5" height="9.4" fill="#a4b8ee"/><rect x="0.3" y="0" width="10.5" height="1.1" fill="url(#ftop)"/><path d="M3.2 8 Q4.3 8.3 4.9 6 L5.8 2.6 Q6.3 1.6 7.5 1.9 M4.1 4.8 H6.9" stroke="#1a2a80" stroke-width="0.8" fill="none"/></svg>
<div class="t bm" style="left:15px;top:60.50px;letter-spacing:0.667px">RaiseException_0</div>
<div class="t bm" style="left:214px;top:60.50px;letter-spacing:0.667px">.text</div>
<div class="a" style="left:12.3px;top:67.43px;width:229.5px;height:9.38px;background:#ffe8ff"></div>
<svg style="left:0.5px;top:67.43px" width="11" height="9.4" viewBox="0 0 11 9.4"><rect x="0.3" y="0" width="10.4" height="9.4" fill="#f6fbff"/><rect x="0.3" y="0" width="1.5" height="9.4" fill="#a4b8ee"/><rect x="9.3" y="0" width="1.5" height="9.4" fill="#a4b8ee"/><rect x="0.3" y="0" width="10.5" height="1.1" fill="url(#ftop)"/><path d="M3.2 8 Q4.3 8.3 4.9 6 L5.8 2.6 Q6.3 1.6 7.5 1.9 M4.1 4.8 H6.9" stroke="#1a2a80" stroke-width="0.8" fill="none"/></svg>
<div class="t bm" style="left:15px;top:69.83px;letter-spacing:0.667px">MultiByteToWideChar_0</div>
<div class="t bm" style="left:214px;top:69.83px;letter-spacing:0.667px">.text</div>
<div class="a" style="left:12.3px;top:76.77px;width:229.5px;height:9.38px;background:#ffe8ff"></div>
<svg style="left:0.5px;top:76.77px" width="11" height="9.4" viewBox="0 0 11 9.4"><rect x="0.3" y="0" width="10.4" height="9.4" fill="#f6fbff"/><rect x="0.3" y="0" width="1.5" height="9.4" fill="#a4b8ee"/><rect x="9.3" y="0" width="1.5" height="9.4" fill="#a4b8ee"/><rect x="0.3" y="0" width="10.5" height="1.1" fill="url(#ftop)"/><path d="M3.2 8 Q4.3 8.3 4.9 6 L5.8 2.6 Q6.3 1.6 7.5 1.9 M4.1 4.8 H6.9" stroke="#1a2a80" stroke-width="0.8" fill="none"/></svg>
<div class="t bm" style="left:15px;top:79.17px;letter-spacing:0.667px">WideCharToMultiByte_0</div>
<div class="t bm" style="left:214px;top:79.17px;letter-spacing:0.667px">.text</div>
<div class="a" style="left:12.3px;top:86.10px;width:229.5px;height:9.38px;background:#ffe8ff"></div>
<svg style="left:0.5px;top:86.10px" width="11" height="9.4" viewBox="0 0 11 9.4"><rect x="0.3" y="0" width="10.4" height="9.4" fill="#f6fbff"/><rect x="0.3" y="0" width="1.5" height="9.4" fill="#a4b8ee"/><rect x="9.3" y="0" width="1.5" height="9.4" fill="#a4b8ee"/><rect x="0.3" y="0" width="10.5" height="1.1" fill="url(#ftop)"/><path d="M3.2 8 Q4.3 8.3 4.9 6 L5.8 2.6 Q6.3 1.6 7.5 1.9 M4.1 4.8 H6.9" stroke="#1a2a80" stroke-width="0.8" fill="none"/></svg>
<div class="t bm" style="left:15px;top:88.50px;letter-spacing:0.667px">RtlCaptureContext_0</div>
<div class="t bm" style="left:214px;top:88.50px;letter-spacing:0.667px">.text</div>
<div class="a" style="left:12.3px;top:95.43px;width:229.5px;height:9.38px;background:#ffe8ff"></div>
<svg style="left:0.5px;top:95.43px" width="11" height="9.4" viewBox="0 0 11 9.4"><rect x="0.3" y="0" width="10.4" height="9.4" fill="#f6fbff"/><rect x="0.3" y="0" width="1.5" height="9.4" fill="#a4b8ee"/><rect x="9.3" y="0" width="1.5" height="9.4" fill="#a4b8ee"/><rect x="0.3" y="0" width="10.5" height="1.1" fill="url(#ftop)"/><path d="M3.2 8 Q4.3 8.3 4.9 6 L5.8 2.6 Q6.3 1.6 7.5 1.9 M4.1 4.8 H6.9" stroke="#1a2a80" stroke-width="0.8" fill="none"/></svg>
<div class="t bm" style="left:15px;top:97.83px;letter-spacing:0.667px">RtlLookupFunctionEntry_0</div>
<div class="t bm" style="left:214px;top:97.83px;letter-spacing:0.667px">.text</div>
<div class="a" style="left:12.3px;top:104.77px;width:229.5px;height:9.38px;background:#ffe8ff"></div>
<svg style="left:0.5px;top:104.77px" width="11" height="9.4" viewBox="0 0 11 9.4"><rect x="0.3" y="0" width="10.4" height="9.4" fill="#f6fbff"/><rect x="0.3" y="0" width="1.5" height="9.4" fill="#a4b8ee"/><rect x="9.3" y="0" width="1.5" height="9.4" fill="#a4b8ee"/><rect x="0.3" y="0" width="10.5" height="1.1" fill="url(#ftop)"/><path d="M3.2 8 Q4.3 8.3 4.9 6 L5.8 2.6 Q6.3 1.6 7.5 1.9 M4.1 4.8 H6.9" stroke="#1a2a80" stroke-width="0.8" fill="none"/></svg>
<div class="t bm" style="left:15px;top:107.17px;letter-spacing:0.667px">RtlVirtualUnwind_0</div>
<div class="t bm" style="left:214px;top:107.17px;letter-spacing:0.667px">.text</div>
<div class="a" style="left:12.3px;top:114.10px;width:229.5px;height:9.38px;background:#ffe8ff"></div>
<svg style="left:0.5px;top:114.10px" width="11" height="9.4" viewBox="0 0 11 9.4"><rect x="0.3" y="0" width="10.4" height="9.4" fill="#f6fbff"/><rect x="0.3" y="0" width="1.5" height="9.4" fill="#a4b8ee"/><rect x="9.3" y="0" width="1.5" height="9.4" fill="#a4b8ee"/><rect x="0.3" y="0" width="10.5" height="1.1" fill="url(#ftop)"/><path d="M3.2 8 Q4.3 8.3 4.9 6 L5.8 2.6 Q6.3 1.6 7.5 1.9 M4.1 4.8 H6.9" stroke="#1a2a80" stroke-width="0.8" fill="none"/></svg>
<div class="t bm" style="left:15px;top:116.50px;letter-spacing:0.667px">UnhandledExceptionFilter_0</div>
<div class="t bm" style="left:214px;top:116.50px;letter-spacing:0.667px">.text</div>
<div class="a" style="left:12.3px;top:123.43px;width:229.5px;height:9.38px;background:#ffe8ff"></div>
<svg style="left:0.5px;top:123.43px" width="11" height="9.4" viewBox="0 0 11 9.4"><rect x="0.3" y="0" width="10.4" height="9.4" fill="#f6fbff"/><rect x="0.3" y="0" width="1.5" height="9.4" fill="#a4b8ee"/><rect x="9.3" y="0" width="1.5" height="9.4" fill="#a4b8ee"/><rect x="0.3" y="0" width="10.5" height="1.1" fill="url(#ftop)"/><path d="M3.2 8 Q4.3 8.3 4.9 6 L5.8 2.6 Q6.3 1.6 7.5 1.9 M4.1 4.8 H6.9" stroke="#1a2a80" stroke-width="0.8" fill="none"/></svg>
<div class="t bm" style="left:15px;top:125.83px;letter-spacing:0.667px">SetUnhandledExceptionFilter_0</div>
<div class="t bm" style="left:214px;top:125.83px;letter-spacing:0.667px">.text</div>
<div class="a" style="left:12.3px;top:132.77px;width:229.5px;height:9.38px;background:#ffe8ff"></div>
<svg style="left:0.5px;top:132.77px" width="11" height="9.4" viewBox="0 0 11 9.4"><rect x="0.3" y="0" width="10.4" height="9.4" fill="#f6fbff"/><rect x="0.3" y="0" width="1.5" height="9.4" fill="#a4b8ee"/><rect x="9.3" y="0" width="1.5" height="9.4" fill="#a4b8ee"/><rect x="0.3" y="0" width="10.5" height="1.1" fill="url(#ftop)"/><path d="M3.2 8 Q4.3 8.3 4.9 6 L5.8 2.6 Q6.3 1.6 7.5 1.9 M4.1 4.8 H6.9" stroke="#1a2a80" stroke-width="0.8" fill="none"/></svg>
<div class="t bm" style="left:15px;top:135.17px;letter-spacing:0.667px">TerminateProcess_0</div>
<div class="t bm" style="left:214px;top:135.17px;letter-spacing:0.667px">.text</div>
<div class="a" style="left:12.3px;top:142.10px;width:229.5px;height:9.38px;background:#ffe8ff"></div>
<svg style="left:0.5px;top:142.10px" width="11" height="9.4" viewBox="0 0 11 9.4"><rect x="0.3" y="0" width="10.4" height="9.4" fill="#f6fbff"/><rect x="0.3" y="0" width="1.5" height="9.4" fill="#a4b8ee"/><rect x="9.3" y="0" width="1.5" height="9.4" fill="#a4b8ee"/><rect x="0.3" y="0" width="10.5" height="1.1" fill="url(#ftop)"/><path d="M3.2 8 Q4.3 8.3 4.9 6 L5.8 2.6 Q6.3 1.6 7.5 1.9 M4.1 4.8 H6.9" stroke="#1a2a80" stroke-width="0.8" fill="none"/></svg>
<div class="t bm" style="left:15px;top:144.50px;letter-spacing:0.667px">IsProcessorFeaturePresent_0</div>
<div class="t bm" style="left:214px;top:144.50px;letter-spacing:0.667px">.text</div>
<div class="a" style="left:12.3px;top:151.43px;width:229.5px;height:9.38px;background:#ffe8ff"></div>
<svg style="left:0.5px;top:151.43px" width="11" height="9.4" viewBox="0 0 11 9.4"><rect x="0.3" y="0" width="10.4" height="9.4" fill="#f6fbff"/><rect x="0.3" y="0" width="1.5" height="9.4" fill="#a4b8ee"/><rect x="9.3" y="0" width="1.5" height="9.4" fill="#a4b8ee"/><rect x="0.3" y="0" width="10.5" height="1.1" fill="url(#ftop)"/><path d="M3.2 8 Q4.3 8.3 4.9 6 L5.8 2.6 Q6.3 1.6 7.5 1.9 M4.1 4.8 H6.9" stroke="#1a2a80" stroke-width="0.8" fill="none"/></svg>
<div class="t bm" style="left:15px;top:153.83px;letter-spacing:0.667px">QueryPerformanceCounter_0</div>
<div class="t bm" style="left:214px;top:153.83px;letter-spacing:0.667px">.text</div>
<div class="a" style="left:12.3px;top:160.77px;width:229.5px;height:9.38px;background:#ffe8ff"></div>
<svg style="left:0.5px;top:160.77px" width="11" height="9.4" viewBox="0 0 11 9.4"><rect x="0.3" y="0" width="10.4" height="9.4" fill="#f6fbff"/><rect x="0.3" y="0" width="1.5" height="9.4" fill="#a4b8ee"/><rect x="9.3" y="0" width="1.5" height="9.4" fill="#a4b8ee"/><rect x="0.3" y="0" width="10.5" height="1.1" fill="url(#ftop)"/><path d="M3.2 8 Q4.3 8.3 4.9 6 L5.8 2.6 Q6.3 1.6 7.5 1.9 M4.1 4.8 H6.9" stroke="#1a2a80" stroke-width="0.8" fill="none"/></svg>
<div class="t bm" style="left:15px;top:163.17px;letter-spacing:0.667px">GetCurrentProcessId_0</div>
<div class="t bm" style="left:214px;top:163.17px;letter-spacing:0.667px">.text</div>
<div class="a" style="left:12.3px;top:170.10px;width:229.5px;height:9.38px;background:#ffe8ff"></div>
<svg style="left:0.5px;top:170.10px" width="11" height="9.4" viewBox="0 0 11 9.4"><rect x="0.3" y="0" width="10.4" height="9.4" fill="#f6fbff"/><rect x="0.3" y="0" width="1.5" height="9.4" fill="#a4b8ee"/><rect x="9.3" y="0" width="1.5" height="9.4" fill="#a4b8ee"/><rect x="0.3" y="0" width="10.5" height="1.1" fill="url(#ftop)"/><path d="M3.2 8 Q4.3 8.3 4.9 6 L5.8 2.6 Q6.3 1.6 7.5 1.9 M4.1 4.8 H6.9" stroke="#1a2a80" stroke-width="0.8" fill="none"/></svg>
<div class="t bm" style="left:15px;top:172.50px;letter-spacing:0.667px">GetSystemTimeAsFileTime_0</div>
<div class="t bm" style="left:214px;top:172.50px;letter-spacing:0.667px">.text</div>
<div class="a" style="left:12.3px;top:179.43px;width:229.5px;height:9.38px;background:#ffe8ff"></div>
<svg style="left:0.5px;top:179.43px" width="11" height="9.4" viewBox="0 0 11 9.4"><rect x="0.3" y="0" width="10.4" height="9.4" fill="#f6fbff"/><rect x="0.3" y="0" width="1.5" height="9.4" fill="#a4b8ee"/><rect x="9.3" y="0" width="1.5" height="9.4" fill="#a4b8ee"/><rect x="0.3" y="0" width="10.5" height="1.1" fill="url(#ftop)"/><path d="M3.2 8 Q4.3 8.3 4.9 6 L5.8 2.6 Q6.3 1.6 7.5 1.9 M4.1 4.8 H6.9" stroke="#1a2a80" stroke-width="0.8" fill="none"/></svg>
<div class="t bm" style="left:15px;top:181.83px;letter-spacing:0.667px">InitializeSListHead_0</div>
<div class="t bm" style="left:214px;top:181.83px;letter-spacing:0.667px">.text</div>
<div class="a" style="left:12.3px;top:188.77px;width:229.5px;height:9.38px;background:#ffe8ff"></div>
<svg style="left:0.5px;top:188.77px" width="11" height="9.4" viewBox="0 0 11 9.4"><rect x="0.3" y="0" width="10.4" height="9.4" fill="#f6fbff"/><rect x="0.3" y="0" width="1.5" height="9.4" fill="#a4b8ee"/><rect x="9.3" y="0" width="1.5" height="9.4" fill="#a4b8ee"/><rect x="0.3" y="0" width="10.5" height="1.1" fill="url(#ftop)"/><path d="M3.2 8 Q4.3 8.3 4.9 6 L5.8 2.6 Q6.3 1.6 7.5 1.9 M4.1 4.8 H6.9" stroke="#1a2a80" stroke-width="0.8" fill="none"/></svg>
<div class="t bm" style="left:15px;top:191.17px;letter-spacing:0.667px">GetStartupInfoW_0</div>
<div class="t bm" style="left:214px;top:191.17px;letter-spacing:0.667px">.text</div>
<div class="a" style="left:12.3px;top:198.10px;width:229.5px;height:9.38px;background:#ffe8ff"></div>
<svg style="left:0.5px;top:198.10px" width="11" height="9.4" viewBox="0 0 11 9.4"><rect x="0.3" y="0" width="10.4" height="9.4" fill="#f6fbff"/><rect x="0.3" y="0" width="1.5" height="9.4" fill="#a4b8ee"/><rect x="9.3" y="0" width="1.5" height="9.4" fill="#a4b8ee"/><rect x="0.3" y="0" width="10.5" height="1.1" fill="url(#ftop)"/><path d="M3.2 8 Q4.3 8.3 4.9 6 L5.8 2.6 Q6.3 1.6 7.5 1.9 M4.1 4.8 H6.9" stroke="#1a2a80" stroke-width="0.8" fill="none"/></svg>
<div class="t bm" style="left:15px;top:200.50px;letter-spacing:0.667px">GetModuleHandleW_0</div>
<div class="t bm" style="left:214px;top:200.50px;letter-spacing:0.667px">.text</div>
<div class="a" style="left:12.3px;top:207.43px;width:229.5px;height:9.38px;background:#ffe8ff"></div>
<svg style="left:0.5px;top:207.43px" width="11" height="9.4" viewBox="0 0 11 9.4"><rect x="0.3" y="0" width="10.4" height="9.4" fill="#f6fbff"/><rect x="0.3" y="0" width="1.5" height="9.4" fill="#a4b8ee"/><rect x="9.3" y="0" width="1.5" height="9.4" fill="#a4b8ee"/><rect x="0.3" y="0" width="10.5" height="1.1" fill="url(#ftop)"/><path d="M3.2 8 Q4.3 8.3 4.9 6 L5.8 2.6 Q6.3 1.6 7.5 1.9 M4.1 4.8 H6.9" stroke="#1a2a80" stroke-width="0.8" fill="none"/></svg>
<div class="t bm" style="left:15px;top:209.83px;letter-spacing:0.667px">GetLastError_0</div>
<div class="t bm" style="left:214px;top:209.83px;letter-spacing:0.667px">.text</div>
<div class="a" style="left:12.3px;top:216.77px;width:229.5px;height:9.38px;background:#ffe8ff"></div>
<svg style="left:0.5px;top:216.77px" width="11" height="9.4" viewBox="0 0 11 9.4"><rect x="0.3" y="0" width="10.4" height="9.4" fill="#f6fbff"/><rect x="0.3" y="0" width="1.5" height="9.4" fill="#a4b8ee"/><rect x="9.3" y="0" width="1.5" height="9.4" fill="#a4b8ee"/><rect x="0.3" y="0" width="10.5" height="1.1" fill="url(#ftop)"/><path d="M3.2 8 Q4.3 8.3 4.9 6 L5.8 2.6 Q6.3 1.6 7.5 1.9 M4.1 4.8 H6.9" stroke="#1a2a80" stroke-width="0.8" fill="none"/></svg>
<div class="t bm" style="left:15px;top:219.17px;letter-spacing:0.667px">HeapAlloc_0</div>
<div class="t bm" style="left:214px;top:219.17px;letter-spacing:0.667px">.text</div>
<div class="a" style="left:12.3px;top:226.10px;width:229.5px;height:9.38px;background:#ffe8ff"></div>
<svg style="left:0.5px;top:226.10px" width="11" height="9.4" viewBox="0 0 11 9.4"><rect x="0.3" y="0" width="10.4" height="9.4" fill="#f6fbff"/><rect x="0.3" y="0" width="1.5" height="9.4" fill="#a4b8ee"/><rect x="9.3" y="0" width="1.5" height="9.4" fill="#a4b8ee"/><rect x="0.3" y="0" width="10.5" height="1.1" fill="url(#ftop)"/><path d="M3.2 8 Q4.3 8.3 4.9 6 L5.8 2.6 Q6.3 1.6 7.5 1.9 M4.1 4.8 H6.9" stroke="#1a2a80" stroke-width="0.8" fill="none"/></svg>
<div class="t bm" style="left:15px;top:228.50px;letter-spacing:0.667px">HeapFree_0</div>
<div class="t bm" style="left:214px;top:228.50px;letter-spacing:0.667px">.text</div>
<div class="a" style="left:12.3px;top:235.43px;width:229.5px;height:9.38px;background:#ffe8ff"></div>
<svg style="left:0.5px;top:235.43px" width="11" height="9.4" viewBox="0 0 11 9.4"><rect x="0.3" y="0" width="10.4" height="9.4" fill="#f6fbff"/><rect x="0.3" y="0" width="1.5" height="9.4" fill="#a4b8ee"/><rect x="9.3" y="0" width="1.5" height="9.4" fill="#a4b8ee"/><rect x="0.3" y="0" width="10.5" height="1.1" fill="url(#ftop)"/><path d="M3.2 8 Q4.3 8.3 4.9 6 L5.8 2.6 Q6.3 1.6 7.5 1.9 M4.1 4.8 H6.9" stroke="#1a2a80" stroke-width="0.8" fill="none"/></svg>
<div class="t bm" style="left:15px;top:237.83px;letter-spacing:0.667px">GetProcessHeap_0</div>
<div class="t bm" style="left:214px;top:237.83px;letter-spacing:0.667px">.text</div>
<div class="a" style="left:12.3px;top:244.77px;width:229.5px;height:9.38px;background:#ffe8ff"></div>
<svg style="left:0.5px;top:244.77px" width="11" height="9.4" viewBox="0 0 11 9.4"><rect x="0.3" y="0" width="10.4" height="9.4" fill="#f6fbff"/><rect x="0.3" y="0" width="1.5" height="9.4" fill="#a4b8ee"/><rect x="9.3" y="0" width="1.5" height="9.4" fill="#a4b8ee"/><rect x="0.3" y="0" width="10.5" height="1.1" fill="url(#ftop)"/><path d="M3.2 8 Q4.3 8.3 4.9 6 L5.8 2.6 Q6.3 1.6 7.5 1.9 M4.1 4.8 H6.9" stroke="#1a2a80" stroke-width="0.8" fill="none"/></svg>
<div class="t bm" style="left:15px;top:247.17px;letter-spacing:0.667px">VirtualQuery_0</div>
<div class="t bm" style="left:214px;top:247.17px;letter-spacing:0.667px">.text</div>
<div class="a" style="left:12.3px;top:254.10px;width:229.5px;height:9.38px;background:#ffe8ff"></div>
<svg style="left:0.5px;top:254.10px" width="11" height="9.4" viewBox="0 0 11 9.4"><rect x="0.3" y="0" width="10.4" height="9.4" fill="#f6fbff"/><rect x="0.3" y="0" width="1.5" height="9.4" fill="#a4b8ee"/><rect x="9.3" y="0" width="1.5" height="9.4" fill="#a4b8ee"/><rect x="0.3" y="0" width="10.5" height="1.1" fill="url(#ftop)"/><path d="M3.2 8 Q4.3 8.3 4.9 6 L5.8 2.6 Q6.3 1.6 7.5 1.9 M4.1 4.8 H6.9" stroke="#1a2a80" stroke-width="0.8" fill="none"/></svg>
<div class="t bm" style="left:15px;top:256.50px;letter-spacing:0.667px">FreeLibrary_0</div>
<div class="t bm" style="left:214px;top:256.50px;letter-spacing:0.667px">.text</div>
<div class="a" style="left:12.3px;top:263.43px;width:229.5px;height:9.38px;background:#ffe8ff"></div>
<svg style="left:0.5px;top:263.43px" width="11" height="9.4" viewBox="0 0 11 9.4"><rect x="0.3" y="0" width="10.4" height="9.4" fill="#f6fbff"/><rect x="0.3" y="0" width="1.5" height="9.4" fill="#a4b8ee"/><rect x="9.3" y="0" width="1.5" height="9.4" fill="#a4b8ee"/><rect x="0.3" y="0" width="10.5" height="1.1" fill="url(#ftop)"/><path d="M3.2 8 Q4.3 8.3 4.9 6 L5.8 2.6 Q6.3 1.6 7.5 1.9 M4.1 4.8 H6.9" stroke="#1a2a80" stroke-width="0.8" fill="none"/></svg>
<div class="t bm" style="left:15px;top:265.83px;letter-spacing:0.667px">GetProcAddress_0</div>
<div class="t bm" style="left:214px;top:265.83px;letter-spacing:0.667px">.text</div>
<div class="a" style="left:12.3px;top:272.77px;width:229.5px;height:9.38px;background:#ffffff"></div>
<svg style="left:0.5px;top:272.77px" width="11" height="9.4" viewBox="0 0 11 9.4"><rect x="0.3" y="0" width="10.4" height="9.4" fill="#f6fbff"/><rect x="0.3" y="0" width="1.5" height="9.4" fill="#a4b8ee"/><rect x="9.3" y="0" width="1.5" height="9.4" fill="#a4b8ee"/><rect x="0.3" y="0" width="10.5" height="1.1" fill="url(#ftop)"/><path d="M3.2 8 Q4.3 8.3 4.9 6 L5.8 2.6 Q6.3 1.6 7.5 1.9 M4.1 4.8 H6.9" stroke="#1a2a80" stroke-width="0.8" fill="none"/></svg>
<div class="t bm rl" style="left:15px;top:275.17px;">__scrt_stub_for_acrt_initialize</div>
<div class="t bm rl" style="left:214px;top:275.17px;">.text</div>
<div class="a" style="left:12.3px;top:282.10px;width:229.5px;height:9.38px;background:#ffffff"></div>
<svg style="left:0.5px;top:282.10px" width="11" height="9.4" viewBox="0 0 11 9.4"><rect x="0.3" y="0" width="10.4" height="9.4" fill="#f6fbff"/><rect x="0.3" y="0" width="1.5" height="9.4" fill="#a4b8ee"/><rect x="9.3" y="0" width="1.5" height="9.4" fill="#a4b8ee"/><rect x="0.3" y="0" width="10.5" height="1.1" fill="url(#ftop)"/><path d="M3.2 8 Q4.3 8.3 4.9 6 L5.8 2.6 Q6.3 1.6 7.5 1.9 M4.1 4.8 H6.9" stroke="#1a2a80" stroke-width="0.8" fill="none"/></svg>
<div class="t bm rl" style="left:15px;top:284.50px;">__scrt_stub_for_acrt_thread_attach</div>
<div class="t bm rl" style="left:214px;top:284.50px;">.text</div>
<div class="a" style="left:12.3px;top:291.43px;width:229.5px;height:9.38px;background:#ffffff"></div>
<svg style="left:0.5px;top:291.43px" width="11" height="9.4" viewBox="0 0 11 9.4"><rect x="0.3" y="0" width="10.4" height="9.4" fill="#f6fbff"/><rect x="0.3" y="0" width="1.5" height="9.4" fill="#a4b8ee"/><rect x="9.3" y="0" width="1.5" height="9.4" fill="#a4b8ee"/><rect x="0.3" y="0" width="10.5" height="1.1" fill="url(#ftop)"/><path d="M3.2 8 Q4.3 8.3 4.9 6 L5.8 2.6 Q6.3 1.6 7.5 1.9 M4.1 4.8 H6.9" stroke="#1a2a80" stroke-width="0.8" fill="none"/></svg>
<div class="t bm rl" style="left:15px;top:293.83px;">__scrt_stub_for_acrt_thread_detach</div>
<div class="t bm rl" style="left:214px;top:293.83px;">.text</div>
<div class="a" style="left:12.3px;top:300.77px;width:229.5px;height:9.38px;background:#ffffff"></div>
<svg style="left:0.5px;top:300.77px" width="11" height="9.4" viewBox="0 0 11 9.4"><rect x="0.3" y="0" width="10.4" height="9.4" fill="#f6fbff"/><rect x="0.3" y="0" width="1.5" height="9.4" fill="#a4b8ee"/><rect x="9.3" y="0" width="1.5" height="9.4" fill="#a4b8ee"/><rect x="0.3" y="0" width="10.5" height="1.1" fill="url(#ftop)"/><path d="M3.2 8 Q4.3 8.3 4.9 6 L5.8 2.6 Q6.3 1.6 7.5 1.9 M4.1 4.8 H6.9" stroke="#1a2a80" stroke-width="0.8" fill="none"/></svg>
<div class="t bm rl" style="left:15px;top:303.17px;">__scrt_stub_for_acrt_uninitialize</div>
<div class="t bm rl" style="left:214px;top:303.17px;">.text</div>
<div class="a" style="left:12.3px;top:310.10px;width:229.5px;height:9.38px;background:#ffffff"></div>
<svg style="left:0.5px;top:310.10px" width="11" height="9.4" viewBox="0 0 11 9.4"><rect x="0.3" y="0" width="10.4" height="9.4" fill="#f6fbff"/><rect x="0.3" y="0" width="1.5" height="9.4" fill="#a4b8ee"/><rect x="9.3" y="0" width="1.5" height="9.4" fill="#a4b8ee"/><rect x="0.3" y="0" width="10.5" height="1.1" fill="url(#ftop)"/><path d="M3.2 8 Q4.3 8.3 4.9 6 L5.8 2.6 Q6.3 1.6 7.5 1.9 M4.1 4.8 H6.9" stroke="#1a2a80" stroke-width="0.8" fill="none"/></svg>
<div class="t bm rl" style="left:15px;top:312.50px;">__scrt_stub_for_acrt_uninitialize_critical</div>
<div class="t bm rl" style="left:214px;top:312.50px;">.text</div>
<div class="a" style="left:12.3px;top:319.43px;width:229.5px;height:9.38px;background:#ffffff"></div>
<svg style="left:0.5px;top:319.43px" width="11" height="9.4" viewBox="0 0 11 9.4"><rect x="0.3" y="0" width="10.4" height="9.4" fill="#f6fbff"/><rect x="0.3" y="0" width="1.5" height="9.4" fill="#a4b8ee"/><rect x="9.3" y="0" width="1.5" height="9.4" fill="#a4b8ee"/><rect x="0.3" y="0" width="10.5" height="1.1" fill="url(#ftop)"/><path d="M3.2 8 Q4.3 8.3 4.9 6 L5.8 2.6 Q6.3 1.6 7.5 1.9 M4.1 4.8 H6.9" stroke="#1a2a80" stroke-width="0.8" fill="none"/></svg>
<div class="t bm rl" style="left:15px;top:321.83px;">__scrt_stub_for_is_c_termination_complete</div>
<div class="t bm rl" style="left:214px;top:321.83px;">.text</div>
<div class="a" style="left:12.3px;top:328.77px;width:229.5px;height:9.38px;background:#ffe8ff"></div>
<svg style="left:0.5px;top:328.77px" width="11" height="9.4" viewBox="0 0 11 9.4"><rect x="0.3" y="0" width="10.4" height="9.4" fill="#f6fbff"/><rect x="0.3" y="0" width="1.5" height="9.4" fill="#a4b8ee"/><rect x="9.3" y="0" width="1.5" height="9.4" fill="#a4b8ee"/><rect x="0.3" y="0" width="10.5" height="1.1" fill="url(#ftop)"/><path d="M3.2 8 Q4.3 8.3 4.9 6 L5.8 2.6 Q6.3 1.6 7.5 1.9 M4.1 4.8 H6.9" stroke="#1a2a80" stroke-width="0.8" fill="none"/></svg>
<div class="t bm" style="left:15px;top:331.17px;letter-spacing:0.667px">memcpy_0</div>
<div class="t bm" style="left:214px;top:331.17px;letter-spacing:0.667px">.text</div>
<div class="a" style="left:12.3px;top:338.10px;width:229.5px;height:9.38px;background:#e8ffff"></div>
<svg style="left:0.5px;top:338.10px" width="11" height="9.4" viewBox="0 0 11 9.4"><rect x="0.3" y="0" width="10.4" height="9.4" fill="#f6fbff"/><rect x="0.3" y="0" width="1.5" height="9.4" fill="#a4b8ee"/><rect x="9.3" y="0" width="1.5" height="9.4" fill="#a4b8ee"/><rect x="0.3" y="0" width="10.5" height="1.1" fill="url(#ftop)"/><path d="M3.2 8 Q4.3 8.3 4.9 6 L5.8 2.6 Q6.3 1.6 7.5 1.9 M4.1 4.8 H6.9" stroke="#1a2a80" stroke-width="0.8" fill="none"/></svg>
<div class="t bm rl" style="left:15px;top:340.50px;">_guard_dispatch_icall_nop</div>
<div class="t bm rl" style="left:214px;top:340.50px;">.text</div>
<div class="a" style="left:12.3px;top:347.43px;width:229.5px;height:9.38px;background:#e8ffff"></div>
<svg style="left:0.5px;top:347.43px" width="11" height="9.4" viewBox="0 0 11 9.4"><rect x="0.3" y="0" width="10.4" height="9.4" fill="#f6fbff"/><rect x="0.3" y="0" width="1.5" height="9.4" fill="#a4b8ee"/><rect x="9.3" y="0" width="1.5" height="9.4" fill="#a4b8ee"/><rect x="0.3" y="0" width="10.5" height="1.1" fill="url(#ftop)"/><path d="M3.2 8 Q4.3 8.3 4.9 6 L5.8 2.6 Q6.3 1.6 7.5 1.9 M4.1 4.8 H6.9" stroke="#1a2a80" stroke-width="0.8" fill="none"/></svg>
<div class="t bm rl" style="left:15px;top:349.83px;">_guard_xfg_dispatch_icall_nop</div>
<div class="t bm rl" style="left:214px;top:349.83px;">.text</div>
<div class="a" style="left:12.3px;top:356.77px;width:229.5px;height:9.38px;background:#ffffff"></div>
<svg style="left:0.5px;top:356.77px" width="11" height="9.4" viewBox="0 0 11 9.4"><rect x="0.3" y="0" width="10.4" height="9.4" fill="#f6fbff"/><rect x="0.3" y="0" width="1.5" height="9.4" fill="#a4b8ee"/><rect x="9.3" y="0" width="1.5" height="9.4" fill="#a4b8ee"/><rect x="0.3" y="0" width="10.5" height="1.1" fill="url(#ftop)"/><path d="M3.2 8 Q4.3 8.3 4.9 6 L5.8 2.6 Q6.3 1.6 7.5 1.9 M4.1 4.8 H6.9" stroke="#1a2a80" stroke-width="0.8" fill="none"/></svg>
<div class="t bm rl" style="left:15px;top:359.17px;">_std__operator___std__char_traits_char_______1<span style="letter-spacing:-1.6px">···</span></div>
<div class="t bm rl" style="left:214px;top:359.17px;">.text</div>
<div class="a" style="left:12.3px;top:366.10px;width:229.5px;height:9.38px;background:#ffffff"></div>
<svg style="left:0.5px;top:366.10px" width="11" height="9.4" viewBox="0 0 11 9.4"><rect x="0.3" y="0" width="10.4" height="9.4" fill="#f6fbff"/><rect x="0.3" y="0" width="1.5" height="9.4" fill="#a4b8ee"/><rect x="9.3" y="0" width="1.5" height="9.4" fill="#a4b8ee"/><rect x="0.3" y="0" width="10.5" height="1.1" fill="url(#ftop)"/><path d="M3.2 8 Q4.3 8.3 4.9 6 L5.8 2.6 Q6.3 1.6 7.5 1.9 M4.1 4.8 H6.9" stroke="#1a2a80" stroke-width="0.8" fill="none"/></svg>
<div class="t bm rl" style="left:15px;top:368.50px;">_std__operator___std__char_traits_char_______1<span style="letter-spacing:-1.6px">···</span></div>
<div class="t bm rl" style="left:214px;top:368.50px;">.text</div>
<div class="a" style="left:12.3px;top:375.43px;width:229.5px;height:9.38px;background:#ffffff"></div>
<svg style="left:0.5px;top:375.43px" width="11" height="9.4" viewBox="0 0 11 9.4"><rect x="0.3" y="0" width="10.4" height="9.4" fill="#f6fbff"/><rect x="0.3" y="0" width="1.5" height="9.4" fill="#a4b8ee"/><rect x="9.3" y="0" width="1.5" height="9.4" fill="#a4b8ee"/><rect x="0.3" y="0" width="10.5" height="1.1" fill="url(#ftop)"/><path d="M3.2 8 Q4.3 8.3 4.9 6 L5.8 2.6 Q6.3 1.6 7.5 1.9 M4.1 4.8 H6.9" stroke="#1a2a80" stroke-width="0.8" fill="none"/></svg>
<div class="t bm rl" style="left:15px;top:377.83px;">_std__basic_ostream_char_std__char_traits_char<span style="letter-spacing:-1.6px">···</span></div>
<div class="t bm rl" style="left:214px;top:377.83px;">.text</div>
<div class="a" style="left:12.3px;top:384.77px;width:229.5px;height:9.38px;background:#e8ffff"></div>
<svg style="left:0.5px;top:384.77px" width="11" height="9.4" viewBox="0 0 11 9.4"><rect x="0.3" y="0" width="10.4" height="9.4" fill="#f6fbff"/><rect x="0.3" y="0" width="1.5" height="9.4" fill="#a4b8ee"/><rect x="9.3" y="0" width="1.5" height="9.4" fill="#a4b8ee"/><rect x="0.3" y="0" width="10.5" height="1.1" fill="url(#ftop)"/><path d="M3.2 8 Q4.3 8.3 4.9 6 L5.8 2.6 Q6.3 1.6 7.5 1.9 M4.1 4.8 H6.9" stroke="#1a2a80" stroke-width="0.8" fill="none"/></svg>
<div class="t bm rl" style="left:15px;top:387.17px;">___scrt_common_main_seh____1___filt$0</div>
<div class="t bm rl" style="left:214px;top:387.17px;">.text</div>
<div class="a" style="left:12.3px;top:394.10px;width:229.5px;height:9.38px;background:#e8ffff"></div>
<svg style="left:0.5px;top:394.10px" width="11" height="9.4" viewBox="0 0 11 9.4"><rect x="0.3" y="0" width="10.4" height="9.4" fill="#f6fbff"/><rect x="0.3" y="0" width="1.5" height="9.4" fill="#a4b8ee"/><rect x="9.3" y="0" width="1.5" height="9.4" fill="#a4b8ee"/><rect x="0.3" y="0" width="10.5" height="1.1" fill="url(#ftop)"/><path d="M3.2 8 Q4.3 8.3 4.9 6 L5.8 2.6 Q6.3 1.6 7.5 1.9 M4.1 4.8 H6.9" stroke="#1a2a80" stroke-width="0.8" fill="none"/></svg>
<div class="t bm rl" style="left:15px;top:396.50px;">_notify_debugger____1___filt$0</div>
<div class="t bm rl" style="left:214px;top:396.50px;">.text</div>
<div class="a" style="left:12.3px;top:403.43px;width:229.5px;height:9.38px;background:#f0f0f0"></div>
<svg style="left:0.5px;top:403.43px" width="11" height="9.4" viewBox="0 0 11 9.4"><rect x="0.3" y="0" width="10.4" height="9.4" fill="#f6fbff"/><rect x="0.3" y="0" width="1.5" height="9.4" fill="#a4b8ee"/><rect x="9.3" y="0" width="1.5" height="9.4" fill="#a4b8ee"/><rect x="0.3" y="0" width="10.5" height="1.1" fill="url(#ftop)"/><path d="M3.2 8 Q4.3 8.3 4.9 6 L5.8 2.6 Q6.3 1.6 7.5 1.9 M4.1 4.8 H6.9" stroke="#1a2a80" stroke-width="0.8" fill="none"/></svg>
<div class="t bm rl" style="left:15px;top:405.83px;">__scrt_is_nonwritable_in_current_image$filt$0</div>
<div class="t bm rl" style="left:214px;top:405.83px;">.text</div>
</div>
<div class="t" style="left:4px;top:547px;font-size:8.4px;color:#000">Line 467 of 467</div>
<svg width="0" height="0" style="left:0;top:0"><defs><linearGradient id="tabg" x1="0" x2="1"><stop offset="0" stop-color="#38c8f8"/><stop offset="1" stop-color="#1038d0"/></linearGradient></defs></svg>
<div class="a" style="left:257px;top:80.5px;width:1023px;height:15.5px;background:#f0f0f0"></div>
<div class="a" style="left:258.5px;top:81px;width:1021px;height:0.9px;background:#dcdcdc"></div>
<div class="a" style="left:258.5px;top:81px;width:0.9px;height:14px;background:#dcdcdc"></div>
<div class="a" style="left:349.5px;top:81.5px;width:1px;height:13.5px;background:#dadada"></div>
<div class="a" style="left:258px;top:94.6px;width:92px;height:1.2px;background:#cfcfcf"></div>
<svg style="left:266.0px;top:82.2px" width="12" height="11" viewBox="0 0 12 11"><rect x="4" y="2.3" width="7.3" height="8.2" rx="0.6" fill="#dfe7f2" stroke="#6f90c0" stroke-width="0.9"/><path d="M6.5 4.5 h3.5 M6.5 6.5 h3.5 M6.5 8.5 h3.5" stroke="#9aaac0" stroke-width="0.7"/><rect x="0.5" y="0.5" width="6" height="8.3" fill="#fdfeff" stroke="#78a8f0" stroke-width="0.8"/><rect x="0.2" y="0.2" width="6.6" height="1.9" fill="url(#tabg)"/></svg>
<div class="t bm rl" style="left:284.0px;top:86.2px;">IDA View-A</div>
<svg style="left:331.5px;top:83.5px" width="10.5" height="10"><rect x="0.3" y="0.3" width="9.4" height="9" rx="1.2" fill="#cfcfcf" stroke="#b4b4b4" stroke-width="0.6"/><path d="M2.8 2.6 L7.2 6.9 M7.2 2.6 L2.8 6.9" stroke="#fff" stroke-width="1.1"/></svg>
<div class="a" style="left:350px;top:80.5px;width:94px;height:15.5px;background:#fff;border-left:1px solid #d8d8d8;border-right:1px solid #d8d8d8"></div>
<svg style="left:358.0px;top:82.2px" width="12" height="11" viewBox="0 0 12 11"><rect x="4" y="2.3" width="7.3" height="8.2" rx="0.6" fill="#dfe7f2" stroke="#6f90c0" stroke-width="0.9"/><path d="M6.5 4.5 h3.5 M6.5 6.5 h3.5 M6.5 8.5 h3.5" stroke="#9aaac0" stroke-width="0.7"/><rect x="0.5" y="0.5" width="6" height="8.3" fill="#fdfeff" stroke="#78a8f0" stroke-width="0.8"/><rect x="0.2" y="0.2" width="6.6" height="1.9" fill="url(#tabg)"/></svg>
<div class="t bm rl" style="left:373.0px;top:86.2px;">Pseudocode-A</div>
<svg style="left:424.5px;top:83.5px" width="10.5" height="10"><rect x="0" y="0" width="10" height="9.5" rx="1.2" fill="#e06848"/><path d="M2.8 2.6 L7.2 6.9 M7.2 2.6 L2.8 6.9" stroke="#fff" stroke-width="1.1"/></svg>
<div class="a" style="left:535.5px;top:81.5px;width:1px;height:13.5px;background:#dadada"></div>
<div class="a" style="left:444px;top:94.6px;width:92px;height:1.2px;background:#cfcfcf"></div>
<svg style="left:452.0px;top:82.2px" width="12" height="11" viewBox="0 0 12 11"><rect x="4" y="2.3" width="7.3" height="8.2" rx="0.6" fill="#dfe7f2" stroke="#6f90c0" stroke-width="0.9"/><path d="M6.5 4.5 h3.5 M6.5 6.5 h3.5 M6.5 8.5 h3.5" stroke="#9aaac0" stroke-width="0.7"/><rect x="0.5" y="0.5" width="6" height="8.3" fill="#fdfeff" stroke="#78a8f0" stroke-width="0.8"/><rect x="0.2" y="0.2" width="6.6" height="1.9" fill="url(#tabg)"/></svg>
<div class="t bm rl" style="left:466.0px;top:86.2px;">Pseudocode-B</div>
<svg style="left:517.5px;top:83.5px" width="10.5" height="10"><rect x="0.3" y="0.3" width="9.4" height="9" rx="1.2" fill="#cfcfcf" stroke="#b4b4b4" stroke-width="0.6"/><path d="M2.8 2.6 L7.2 6.9 M7.2 2.6 L2.8 6.9" stroke="#fff" stroke-width="1.1"/></svg>
<div class="a" style="left:628.5px;top:81.5px;width:1px;height:13.5px;background:#dadada"></div>
<div class="a" style="left:536px;top:94.6px;width:93px;height:1.2px;background:#cfcfcf"></div>
<svg style="left:544.0px;top:82.2px" width="12" height="11" viewBox="0 0 12 11"><rect x="4" y="2.3" width="7.3" height="8.2" rx="0.6" fill="#dfe7f2" stroke="#6f90c0" stroke-width="0.9"/><path d="M6.5 4.5 h3.5 M6.5 6.5 h3.5 M6.5 8.5 h3.5" stroke="#9aaac0" stroke-width="0.7"/><rect x="0.5" y="0.5" width="6" height="8.3" fill="#fdfeff" stroke="#78a8f0" stroke-width="0.8"/><rect x="0.2" y="0.2" width="6.6" height="1.9" fill="url(#tabg)"/></svg>
<div class="t bm rl" style="left:558.5px;top:86.2px;">Pseudocode-C</div>
<svg style="left:610.5px;top:83.5px" width="10.5" height="10"><rect x="0.3" y="0.3" width="9.4" height="9" rx="1.2" fill="#cfcfcf" stroke="#b4b4b4" stroke-width="0.6"/><path d="M2.8 2.6 L7.2 6.9 M7.2 2.6 L2.8 6.9" stroke="#fff" stroke-width="1.1"/></svg>
<div class="a" style="left:721.5px;top:81.5px;width:1px;height:13.5px;background:#dadada"></div>
<div class="a" style="left:629px;top:94.6px;width:93px;height:1.2px;background:#cfcfcf"></div>
<svg style="left:637.0px;top:82.2px" width="12" height="11" viewBox="0 0 12 11"><rect x="4" y="2.3" width="7.3" height="8.2" rx="0.6" fill="#dfe7f2" stroke="#6f90c0" stroke-width="0.9"/><path d="M6.5 4.5 h3.5 M6.5 6.5 h3.5 M6.5 8.5 h3.5" stroke="#9aaac0" stroke-width="0.7"/><rect x="0.5" y="0.5" width="6" height="8.3" fill="#fdfeff" stroke="#78a8f0" stroke-width="0.8"/><rect x="0.2" y="0.2" width="6.6" height="1.9" fill="url(#tabg)"/></svg>
<div class="t bm rl" style="left:651.5px;top:86.2px;">Pseudocode-D</div>
<svg style="left:703.5px;top:83.5px" width="10.5" height="10"><rect x="0.3" y="0.3" width="9.4" height="9" rx="1.2" fill="#cfcfcf" stroke="#b4b4b4" stroke-width="0.6"/><path d="M2.8 2.6 L7.2 6.9 M7.2 2.6 L2.8 6.9" stroke="#fff" stroke-width="1.1"/></svg>
<div class="a" style="left:814.5px;top:81.5px;width:1px;height:13.5px;background:#dadada"></div>
<div class="a" style="left:722px;top:94.6px;width:93px;height:1.2px;background:#cfcfcf"></div>
<svg style="left:730.0px;top:82.2px" width="12" height="11" viewBox="0 0 12 11"><rect x="4" y="2.3" width="7.3" height="8.2" rx="0.6" fill="#dfe7f2" stroke="#6f90c0" stroke-width="0.9"/><path d="M6.5 4.5 h3.5 M6.5 6.5 h3.5 M6.5 8.5 h3.5" stroke="#9aaac0" stroke-width="0.7"/><rect x="0.5" y="0.5" width="6" height="8.3" fill="#fdfeff" stroke="#78a8f0" stroke-width="0.8"/><rect x="0.2" y="0.2" width="6.6" height="1.9" fill="url(#tabg)"/></svg>
<div class="t bm rl" style="left:744.5px;top:86.2px;">Pseudocode-E</div>
<svg style="left:796.5px;top:83.5px" width="10.5" height="10"><rect x="0.3" y="0.3" width="9.4" height="9" rx="1.2" fill="#cfcfcf" stroke="#b4b4b4" stroke-width="0.6"/><path d="M2.8 2.6 L7.2 6.9 M7.2 2.6 L2.8 6.9" stroke="#fff" stroke-width="1.1"/></svg>
<div class="a" style="left:908.5px;top:81.5px;width:1px;height:13.5px;background:#dadada"></div>
<div class="a" style="left:815px;top:94.6px;width:94px;height:1.2px;background:#cfcfcf"></div>
<svg style="left:823.5px;top:83px" width="11" height="11" viewBox="0 0 11 11"><rect x="0.5" y="0.5" width="10" height="10" fill="#eef4ff" stroke="#5a88e0" stroke-width="0.8"/><circle cx="5.5" cy="6" r="3" fill="none" stroke="#2050d0" stroke-width="1"/></svg>
<div class="t bm rl" style="left:842.0px;top:86.2px;">Hex View-1</div>
<svg style="left:890.5px;top:83.5px" width="10.5" height="10"><rect x="0.3" y="0.3" width="9.4" height="9" rx="1.2" fill="#cfcfcf" stroke="#b4b4b4" stroke-width="0.6"/><path d="M2.8 2.6 L7.2 6.9 M7.2 2.6 L2.8 6.9" stroke="#fff" stroke-width="1.1"/></svg>
<div class="a" style="left:1000.5px;top:81.5px;width:1px;height:13.5px;background:#dadada"></div>
<div class="a" style="left:909px;top:94.6px;width:92px;height:1.2px;background:#cfcfcf"></div>
<svg style="left:917.5px;top:83px" width="11" height="11" viewBox="0 0 11 11"><rect x="0.5" y="0.5" width="10" height="10" fill="#eef4ff" stroke="#5a88e0" stroke-width="0.8"/><path d="M0.5 0.8 H10.5" stroke="#1a50d0" stroke-width="1.2"/><path d="M3 9 L5.5 2.5 L8 9 M3.8 7 H7.2" stroke="#2050b0" stroke-width="0.9" fill="none"/></svg>
<div class="t bm rl" style="left:935.0px;top:86.2px;">Structures</div>
<svg style="left:982.5px;top:83.5px" width="10.5" height="10"><rect x="0.3" y="0.3" width="9.4" height="9" rx="1.2" fill="#cfcfcf" stroke="#b4b4b4" stroke-width="0.6"/><path d="M2.8 2.6 L7.2 6.9 M7.2 2.6 L2.8 6.9" stroke="#fff" stroke-width="1.1"/></svg>
<div class="a" style="left:1093.5px;top:81.5px;width:1px;height:13.5px;background:#dadada"></div>
<div class="a" style="left:1001px;top:94.6px;width:93px;height:1.2px;background:#cfcfcf"></div>
<svg style="left:1009.5px;top:83px" width="11" height="11" viewBox="0 0 11 11"><rect x="0.5" y="0.5" width="10" height="10" fill="#fff" stroke="#5a88e0" stroke-width="0.8"/><path d="M0.5 0.8 H10.5" stroke="#1a50d0" stroke-width="1.2"/><path d="M2.5 3.5 h2 M2.5 5.5 h2 M2.5 7.5 h2 M6 3.5 h2.5 M6 5.5 h2.5 M6 7.5 h2.5" stroke="#2050d0" stroke-width="1"/></svg>
<div class="t bm rl" style="left:1037.5px;top:86.2px;">Enums</div>
<svg style="left:1075.5px;top:83.5px" width="10.5" height="10"><rect x="0.3" y="0.3" width="9.4" height="9" rx="1.2" fill="#cfcfcf" stroke="#b4b4b4" stroke-width="0.6"/><path d="M2.8 2.6 L7.2 6.9 M7.2 2.6 L2.8 6.9" stroke="#fff" stroke-width="1.1"/></svg>
<div class="a" style="left:1186.5px;top:81.5px;width:1px;height:13.5px;background:#dadada"></div>
<div class="a" style="left:1094px;top:94.6px;width:93px;height:1.2px;background:#cfcfcf"></div>
<svg style="left:1102.5px;top:83px" width="11" height="11" viewBox="0 0 11 11"><rect x="2.5" y="2" width="8" height="8.5" fill="#dfe8ff" stroke="#4a78d8" stroke-width="0.8"/><rect x="0.5" y="0.5" width="10" height="2" fill="#3a70e0"/><rect x="6" y="4" width="2" height="6" fill="#3a70e0"/><path d="M1.5 3 L5 6.5 M2 6.5 H5 V3.5" stroke="#109020" stroke-width="1.2" fill="none"/></svg>
<div class="t bm rl" style="left:1126.5px;top:86.2px;">Imports</div>
<svg style="left:1168.5px;top:83.5px" width="10.5" height="10"><rect x="0.3" y="0.3" width="9.4" height="9" rx="1.2" fill="#cfcfcf" stroke="#b4b4b4" stroke-width="0.6"/><path d="M2.8 2.6 L7.2 6.9 M7.2 2.6 L2.8 6.9" stroke="#fff" stroke-width="1.1"/></svg>
<div class="a" style="left:1278.5px;top:81.5px;width:1px;height:13.5px;background:#dadada"></div>
<div class="a" style="left:1187px;top:94.6px;width:92px;height:1.2px;background:#cfcfcf"></div>
<svg style="left:1195.5px;top:83px" width="11" height="11" viewBox="0 0 11 11"><rect x="0.5" y="1" width="10" height="9.5" fill="#dfe8ff" stroke="#4a78d8" stroke-width="0.8"/><rect x="0.5" y="0.5" width="10" height="2" fill="#3a70e0"/><rect x="2" y="4" width="2" height="6" fill="#3a70e0"/><path d="M4.5 7.5 L8.5 3.5 M5.5 3.5 H8.5 V6.5" stroke="#109020" stroke-width="1.2" fill="none"/></svg>
<div class="t bm rl" style="left:1219.0px;top:86.2px;">Exports</div>
<svg style="left:1260.5px;top:83.5px" width="10.5" height="10"><rect x="0.3" y="0.3" width="9.4" height="9" rx="1.2" fill="#cfcfcf" stroke="#b4b4b4" stroke-width="0.6"/><path d="M2.8 2.6 L7.2 6.9 M7.2 2.6 L2.8 6.9" stroke="#fff" stroke-width="1.1"/></svg>
<div class="a" style="left:257.5px;top:96px;width:1022.5px;height:462px;background:#fff"></div>
<div class="a" style="left:285px;top:96px;width:995px;height:461.5px;border:1.3px solid #4c9ae6;border-right-width:1.3px;background:#fff"></div>
<div class="a" style="left:286.3px;top:544px;width:992.4px;height:12.2px;background:#f0f0f0"></div>
<div class="a" style="left:325.5px;top:544.5px;width:0.8px;height:11.5px;background:#dcdcdc"></div>
<div class="a" style="left:474px;top:544.5px;width:0.8px;height:11.5px;background:#dcdcdc"></div>
<div class="a" style="left:482.7px;top:544.5px;width:0.8px;height:11.5px;background:#dcdcdc"></div>
<div class="t bm rl" style="left:287.5px;top:548.3px;letter-spacing:0.667px;color:#222">00001FC0 ?main0@@YAXXZ:23 (7FF618402BC0)</div>
<div class="a" style="left:286.3px;top:316.25px;width:992.4px;height:10px;background:#e3e3e3"></div>
<div class="a" style="left:686.5px;top:316.25px;width:1px;height:10px;background:#000"></div>
<div class="t cd" style="left:276.53px;top:97.65px;color:#8c8c8c;-webkit-text-stroke:0">1</div>
<div class="t cd" style="left:286.4px;top:97.65px"><span style="color:#9a9a9a">void main0</span><span style="color:#000080">(</span><span style="color:#9a9a9a">void</span><span style="color:#000080">)</span></div>
<div class="t cd" style="left:276.53px;top:107.65px;color:#8c8c8c;-webkit-text-stroke:0">2</div>
<div class="t cd" style="left:286.4px;top:107.65px"><span style="color:#000080">{</span></div>
<div class="t cd" style="left:276.53px;top:117.65px;color:#8c8c8c;-webkit-text-stroke:0">3</div>
<div class="t cd" style="left:286.4px;top:117.65px"><span style="color:#000080">  char *v0; </span><span style="color:#3c3ce8">// </span><span style="color:#a0a0ff">rdi</span></div>
<div class="t cd" style="left:276.53px;top:127.65px;color:#8c8c8c;-webkit-text-stroke:0">4</div>
<div class="t cd" style="left:286.4px;top:127.65px"><span style="color:#000080">  __int64 j; </span><span style="color:#3c3ce8">// </span><span style="color:#a0a0ff">rcx</span></div>
<div class="t cd" style="left:276.53px;top:137.65px;color:#8c8c8c;-webkit-text-stroke:0">5</div>
<div class="t cd" style="left:286.4px;top:137.65px"><span style="color:#9a9a9a">  char v2</span><span style="color:#000080">; </span><span style="color:#3c3ce8">// </span><span style="color:#a0a0ff">[rsp+20h] [rbp+0h] BYREF</span></div>
<div class="t cd" style="left:276.53px;top:147.65px;color:#8c8c8c;-webkit-text-stroke:0">6</div>
<div class="t cd" style="left:286.4px;top:147.65px"><span style="color:#000080">  unsigned __int8 aaa[32]; </span><span style="color:#3c3ce8">// </span><span style="color:#a0a0ff">[rsp+28h] [rbp+8h] BYREF</span></div>
<div class="t cd" style="left:276.53px;top:157.65px;color:#8c8c8c;-webkit-text-stroke:0">7</div>
<div class="t cd" style="left:286.4px;top:157.65px"><span style="color:#000080">  int i; </span><span style="color:#3c3ce8">// </span><span style="color:#a0a0ff">[rsp+64h] [rbp+44h]</span></div>
<div class="t cd" style="left:276.53px;top:167.65px;color:#8c8c8c;-webkit-text-stroke:0">8</div>
<div class="t cd" style="left:286.4px;top:167.65px"><span style="color:#9a9a9a">  char v5</span><span style="color:#000080">[23]; </span><span style="color:#3c3ce8">// </span><span style="color:#a0a0ff">[rsp+88h] [rbp+68h] BYREF</span></div>
<div class="t cd" style="left:276.53px;top:177.65px;color:#8c8c8c;-webkit-text-stroke:0">9</div>
<div class="t cd" style="left:286.4px;top:177.65px"><span style="color:#9a9a9a">  char v6</span><span style="color:#000080">[9]; </span><span style="color:#3c3ce8">// </span><span style="color:#a0a0ff">[rsp+9Fh] [rbp+7Fh] BYREF</span></div>
<div class="t cd" style="left:271.87px;top:187.65px;color:#8c8c8c;-webkit-text-stroke:0">10</div>
<div class="t cd" style="left:286.4px;top:187.65px"><span style="color:#9a9a9a">  int k</span><span style="color:#000080">; </span><span style="color:#3c3ce8">// </span><span style="color:#a0a0ff">[rsp+C4h] [rbp+A4h]</span></div>
<div class="t cd" style="left:271.87px;top:197.65px;color:#8c8c8c;-webkit-text-stroke:0">11</div>
<div class="t cd" style="left:286.4px;top:197.65px"></div>
<div class="t cd" style="left:271.87px;top:207.65px;color:#8c8c8c;-webkit-text-stroke:0">12</div>
<div class="a" style="left:262px;top:208.25px;width:6px;height:6px;border-radius:50%;background:#5ac8fa"></div>
<div class="t cd" style="left:286.4px;top:207.65px"><span style="color:#000080">  </span><span style="color:#8c8cf0">v0</span><span style="color:#000080"> = &amp;</span><span style="color:#8c8cf0">v2</span><span style="color:#000080">;</span></div>
<div class="t cd" style="left:271.87px;top:217.65px;color:#8c8c8c;-webkit-text-stroke:0">13</div>
<div class="a" style="left:262px;top:218.25px;width:6px;height:6px;border-radius:50%;background:#5ac8fa"></div>
<div class="t cd" style="left:286.4px;top:217.65px"><span style="color:#000080">  for ( </span><span style="color:#8c8cf0">j</span><span style="color:#000080"> = 50i64; </span><span style="color:#8c8cf0">j</span><span style="color:#000080">; --</span><span style="color:#8c8cf0">j</span><span style="color:#000080"> )</span></div>
<div class="t cd" style="left:271.87px;top:227.65px;color:#8c8c8c;-webkit-text-stroke:0">14</div>
<div class="t cd" style="left:286.4px;top:227.65px"><span style="color:#000080">  {</span></div>
<div class="t cd" style="left:271.87px;top:237.65px;color:#8c8c8c;-webkit-text-stroke:0">15</div>
<div class="a" style="left:262px;top:238.25px;width:6px;height:6px;border-radius:50%;background:#5ac8fa"></div>
<div class="t cd" style="left:286.4px;top:237.65px"><span style="color:#000080">    *(</span><span style="color:#9a9a9a">_DWORD *</span><span style="color:#000080">)</span><span style="color:#8c8cf0">v0</span><span style="color:#000080"> = -858993460;</span></div>
<div class="t cd" style="left:271.87px;top:247.65px;color:#8c8c8c;-webkit-text-stroke:0">16</div>
<div class="a" style="left:262px;top:248.25px;width:6px;height:6px;border-radius:50%;background:#5ac8fa"></div>
<div class="t cd" style="left:286.4px;top:247.65px"><span style="color:#000080">    </span><span style="color:#8c8cf0">v0</span><span style="color:#000080"> += 4;</span></div>
<div class="t cd" style="left:271.87px;top:257.65px;color:#8c8c8c;-webkit-text-stroke:0">17</div>
<div class="t cd" style="left:286.4px;top:257.65px"><span style="color:#000080">  }</span></div>
<div class="t cd" style="left:271.87px;top:267.65px;color:#8c8c8c;-webkit-text-stroke:0">18</div>
<div class="a" style="left:262px;top:268.25px;width:6px;height:6px;border-radius:50%;background:#5ac8fa"></div>
<div class="t cd" style="left:286.4px;top:267.65px"><span style="color:#000080">  </span><span style="color:#4040f0">j___CheckForDebuggerJustMyCode</span><span style="color:#000080">(&amp;</span><span style="color:#4040f0">_6D15E8DE_Pangbai____1__Pangbai____1__1_cpp</span><span style="color:#000080">);</span></div>
<div class="t cd" style="left:271.87px;top:277.65px;color:#8c8c8c;-webkit-text-stroke:0">19</div>
<div class="a" style="left:262px;top:278.25px;width:6px;height:6px;border-radius:50%;background:#5ac8fa"></div>
<div class="t cd" style="left:286.4px;top:277.65px"><span style="color:#000080">  </span><span style="color:#ff30ff">CheckRemoteDebuggerPresent</span><span style="color:#000080">(</span><span style="color:#3848c8">m1a0</span><span style="color:#000080">, &amp;</span><span style="color:#3848c8">miao</span><span style="color:#000080">);</span></div>
<div class="t cd" style="left:271.87px;top:287.65px;color:#8c8c8c;-webkit-text-stroke:0">20</div>
<div class="a" style="left:262px;top:288.25px;width:6px;height:6px;border-radius:50%;background:#5ac8fa"></div>
<div class="t cd" style="left:286.4px;top:287.65px"><span style="color:#000080">  if ( </span><span style="color:#3848c8">miao</span><span style="color:#000080"> | </span><span style="color:#ff30ff">IsDebuggerPresent</span><span style="color:#000080">() )</span></div>
<div class="t cd" style="left:271.87px;top:297.65px;color:#8c8c8c;-webkit-text-stroke:0">21</div>
<div class="t cd" style="left:286.4px;top:297.65px"><span style="color:#000080">  {</span></div>
<div class="t cd" style="left:271.87px;top:307.65px;color:#8c8c8c;-webkit-text-stroke:0">22</div>
<div class="a" style="left:262px;top:308.25px;width:6px;height:6px;border-radius:50%;background:#5ac8fa"></div>
<div class="t cd" style="left:286.4px;top:307.65px"><span style="color:#000080">    qmemcpy(</span><span style="color:#8c8cf0">aaa</span><span style="color:#000080">, </span><span style="color:#109010">"nhvviCS"</span><span style="color:#000080">, 7);</span></div>
<div class="t cd" style="left:271.87px;top:317.65px;color:#8c8c8c;-webkit-text-stroke:0">23</div>
<div class="a" style="left:262px;top:318.25px;width:6px;height:6px;border-radius:50%;background:#5ac8fa"></div>
<div class="t cd" style="left:286.4px;top:317.65px"><span style="color:#000080">    </span><span style="color:#8c8cf0">aaa</span><span style="color:#000080">[7] = 127;</span></div>
<div class="t cd" style="left:271.87px;top:327.65px;color:#8c8c8c;-webkit-text-stroke:0">24</div>
<div class="a" style="left:262px;top:328.25px;width:6px;height:6px;border-radius:50%;background:#5ac8fa"></div>
<div class="t cd" style="left:286.4px;top:327.65px"><span style="color:#000080">    qmemcpy(&amp;</span><span style="color:#8c8cf0">aaa</span><span style="color:#000080">[8], </span><span style="color:#109010">"R{e8%oCrdepIvebcR"</span><span style="color:#000080">, 17);</span></div>
<div class="t cd" style="left:271.87px;top:337.65px;color:#8c8c8c;-webkit-text-stroke:0">25</div>
<div class="a" style="left:262px;top:338.25px;width:6px;height:6px;border-radius:50%;background:#5ac8fa"></div>
<div class="t cd" style="left:286.4px;top:337.65px"><span style="color:#000080">    </span><span style="color:#8c8cf0">aaa</span><span style="color:#000080">[25] = 127;</span></div>
<div class="t cd" style="left:271.87px;top:347.65px;color:#8c8c8c;-webkit-text-stroke:0">26</div>
<div class="a" style="left:262px;top:348.25px;width:6px;height:6px;border-radius:50%;background:#5ac8fa"></div>
<div class="t cd" style="left:286.4px;top:347.65px"><span style="color:#000080">    qmemcpy(&amp;</span><span style="color:#8c8cf0">aaa</span><span style="color:#000080">[26], </span><span style="color:#109010">"b&gt;&amp;ah{"</span><span style="color:#000080">, 6);</span></div>
<div class="t cd" style="left:271.87px;top:357.65px;color:#8c8c8c;-webkit-text-stroke:0">27</div>
<div class="a" style="left:262px;top:358.25px;width:6px;height:6px;border-radius:50%;background:#5ac8fa"></div>
<div class="t cd" style="left:286.4px;top:357.65px"><span style="color:#000080">    for ( </span><span style="color:#8c8cf0">i</span><span style="color:#000080"> = 0; </span><span style="color:#8c8cf0">i</span><span style="color:#000080"> &lt; 32; ++</span><span style="color:#8c8cf0">i</span><span style="color:#000080"> )</span></div>
<div class="t cd" style="left:271.87px;top:367.65px;color:#8c8c8c;-webkit-text-stroke:0">28</div>
<div class="a" style="left:262px;top:368.25px;width:6px;height:6px;border-radius:50%;background:#5ac8fa"></div>
<div class="t cd" style="left:286.4px;top:367.65px"><span style="color:#000080">      key[</span><span style="color:#8c8cf0">i</span><span style="color:#000080">] ^= </span><span style="color:#8c8cf0">aaa</span><span style="color:#000080">[</span><span style="color:#8c8cf0">i</span><span style="color:#000080">];</span></div>
<div class="t cd" style="left:271.87px;top:377.65px;color:#8c8c8c;-webkit-text-stroke:0">29</div>
<div class="t cd" style="left:286.4px;top:377.65px"><span style="color:#000080">  }</span></div>
<div class="t cd" style="left:271.87px;top:387.65px;color:#8c8c8c;-webkit-text-stroke:0">30</div>
<div class="t cd" style="left:286.4px;top:387.65px"><span style="color:#000080">  else</span></div>
<div class="t cd" style="left:271.87px;top:397.65px;color:#8c8c8c;-webkit-text-stroke:0">31</div>
<div class="t cd" style="left:286.4px;top:397.65px"><span style="color:#000080">  {</span></div>
<div class="t cd" style="left:271.87px;top:407.65px;color:#8c8c8c;-webkit-text-stroke:0">32</div>
<div class="a" style="left:262px;top:408.25px;width:6px;height:6px;border-radius:50%;background:#5ac8fa"></div>
<div class="t cd" style="left:286.4px;top:407.65px"><span style="color:#000080">    qmemcpy(</span><span style="color:#8c8cf0">v5</span><span style="color:#000080">, </span><span style="color:#109010">"nhvviguMI?u\",o/fWivoM;"</span><span style="color:#000080">, 22);</span></div>
<div class="t cd" style="left:271.87px;top:417.65px;color:#8c8c8c;-webkit-text-stroke:0">33</div>
<div class="a" style="left:262px;top:418.25px;width:6px;height:6px;border-radius:50%;background:#5ac8fa"></div>
<div class="t cd" style="left:286.4px;top:417.65px"><span style="color:#000080">    </span><span style="color:#8c8cf0">v5</span><span style="color:#000080">[22] = 127;</span></div>
<div class="t cd" style="left:271.87px;top:427.65px;color:#8c8c8c;-webkit-text-stroke:0">34</div>
<div class="a" style="left:262px;top:428.25px;width:6px;height:6px;border-radius:50%;background:#5ac8fa"></div>
<div class="t cd" style="left:286.4px;top:427.65px"><span style="color:#000080">    qmemcpy(</span><span style="color:#8c8cf0">v6</span><span style="color:#000080">, </span><span style="color:#109010">"Homy2.l#{"</span><span style="color:#000080">, sizeof(</span><span style="color:#8c8cf0">v6</span><span style="color:#000080">));</span></div>
<div class="t cd" style="left:271.87px;top:437.65px;color:#8c8c8c;-webkit-text-stroke:0">35</div>
<div class="a" style="left:262px;top:438.25px;width:6px;height:6px;border-radius:50%;background:#5ac8fa"></div>
<div class="t cd" style="left:286.4px;top:437.65px"><span style="color:#000080">    for ( </span><span style="color:#8c8cf0">k</span><span style="color:#000080"> = 0; </span><span style="color:#8c8cf0">k</span><span style="color:#000080"> &lt; 32; ++</span><span style="color:#8c8cf0">k</span><span style="color:#000080"> )</span></div>
<div class="t cd" style="left:271.87px;top:447.65px;color:#8c8c8c;-webkit-text-stroke:0">36</div>
<div class="a" style="left:262px;top:448.25px;width:6px;height:6px;border-radius:50%;background:#5ac8fa"></div>
<div class="t cd" style="left:286.4px;top:447.65px"><span style="color:#000080">      key[</span><span style="color:#8c8cf0">k</span><span style="color:#000080">] ^= </span><span style="color:#8c8cf0">v5</span><span style="color:#000080">[</span><span style="color:#8c8cf0">k</span><span style="color:#000080">];</span></div>
<div class="t cd" style="left:271.87px;top:457.65px;color:#8c8c8c;-webkit-text-stroke:0">37</div>
<div class="t cd" style="left:286.4px;top:457.65px"><span style="color:#000080">  }</span></div>
<div class="t cd" style="left:271.87px;top:467.65px;color:#8c8c8c;-webkit-text-stroke:0">38</div>
<div class="a" style="left:262px;top:468.25px;width:6px;height:6px;border-radius:50%;background:#5ac8fa"></div>
<div class="t cd" style="left:286.4px;top:467.65px"><span style="color:#000080">}</span></div>
<div class="a" style="left:282.8px;top:96px;width:0.8px;height:462px;background:#ececec"></div>
<div class="a" style="left:0px;top:557.5px;width:1280px;height:135px;background:#f0f0f0"></div>
<div class="a" style="left:0px;top:559.8px;width:1280px;height:1.3px;background:#c4c4c4"></div>
<div class="a" style="left:1px;top:560.5px;width:1278.5px;height:19.2px;background:#f0f0f0;border:1px solid #b4b4b4;border-width:1px 1.5px 1.5px 1px"></div>
<svg style="left:3px;top:564px" width="10.5" height="10.5" viewBox="0 0 10.5 10.5"><rect x="0.5" y="0.5" width="9.5" height="9.5" fill="#e4ecf8" stroke="#9aaed0" stroke-width="0.8"/><path d="M0.5 1 H10" stroke="#2060e0" stroke-width="1.4"/><rect x="2.5" y="3.5" width="5.5" height="5" fill="#a8b8d0"/></svg>
<div class="t bm rg" style="left:17px;top:567.5px;">Output</div>
<svg style="left:1232px;top:567px" width="45" height="8"><rect x="0.7" y="0.7" width="6.2" height="6" fill="none" stroke="#222" stroke-width="0.9"/><path d="M0.7 1.6 H6.9" stroke="#222" stroke-width="1.3"/><rect x="18.5" y="2.5" width="4" height="4" fill="none" stroke="#222" stroke-width="0.8"/><path d="M20 2.5 V1 H24 V5 H22.5" fill="none" stroke="#222" stroke-width="0.8"/><path d="M35.5 1 L40.5 6 M40.5 1 L35.5 6" stroke="#222" stroke-width="1"/></svg>
<div class="a" style="left:1px;top:581.3px;width:1278.5px;height:81px;background:#fff;border:1px solid #b4b4b4;border-width:1px 1.5px 1.5px 1px"></div>
<div class="a" style="left:1268px;top:582.3px;width:10px;height:78.5px;background:#f0f0f0"></div>
<svg style="left:1269.5px;top:585.5px" width="8" height="5"><path d="M0.8 4 L3.8 1 L6.8 4" stroke="#404040" stroke-width="1" fill="none"/></svg>
<svg style="left:1269.5px;top:654px" width="8" height="5"><path d="M0.8 1 L3.8 4 L6.8 1" stroke="#404040" stroke-width="1" fill="none"/></svg>
<div class="a" style="left:1268.8px;top:638.4px;width:8.5px;height:12.6px;background:#cdcdcd"></div>
<div class="a" style="left:2px;top:582.3px;width:1266px;height:79px;overflow:hidden">
<div class="t cd" style="left:2.8px;top:0.90px;color:#111">7FF618403850: restored microcode from idb</div>
<div class="t cd" style="left:2.8px;top:10.87px;color:#111">7FF618403850: restored pseudocode from idb</div>
<div class="t cd" style="left:2.8px;top:20.84px;color:#111">7FF6184131A8: using guessed type __int64 __fastcall std::ostream::operator&lt;&lt;(_QWORD, _QWORD);</div>
<div class="t cd" style="left:2.8px;top:30.81px;color:#111">[Patching] Loaded v0.1.2 - (c) Markus Gaasedelen - 2022</div>
<div class="t cd" style="left:2.8px;top:40.78px;color:#111">---------------------------------------------------------------------------------------------</div>
<div class="t cd" style="left:2.8px;top:50.75px;color:#111">Python 3.11.7 (tags/v3.11.7:fa7a6f2, Dec  4 2023, 19:24:49) [MSC v.1937 64 bit (AMD64)]</div>
<div class="t cd" style="left:2.8px;top:60.72px;color:#111">IDAPython 64-bit v7.4.0 final (serial 0) (c) The IDAPython Team &lt;idapython@googlegroups.com&gt;</div>
<div class="t cd" style="left:2.8px;top:70.69px;color:#111">---------------------------------------------------------------------------------------------</div>
</div>
<div class="a" style="left:1.4px;top:664.5px;width:30.4px;height:13.2px;background:#e6e6e6;border:1px solid #c8c8c8"></div>
<div class="t bm rg" style="left:4.5px;top:669px;">Python</div>
<div class="a" style="left:34.4px;top:664.5px;width:1245px;height:13.2px;background:#fff;border:1px solid #a8a8a8"></div>
<div class="t bm rg" style="left:1.4px;top:684.2px;letter-spacing:0.667px">AU:  idle</div>
<div class="t bm rg" style="left:57px;top:684.2px;letter-spacing:0.667px">Down</div>
<div class="t bm rg" style="left:107.5px;top:684.2px;letter-spacing:0.667px">Disk: 42GB</div>
<div class="a" style="left:52.5px;top:679.5px;width:0.8px;height:12px;background:#dadada"></div>
<div class="a" style="left:104.5px;top:679.5px;width:0.8px;height:12px;background:#dadada"></div>
<div class="a" style="left:155.5px;top:679.5px;width:0.8px;height:12px;background:#dadada"></div>
<div class="a" style="left:0px;top:692.5px;width:1280px;height:6px;background:#fff"></div>
<div class="a" style="left:0px;top:692.5px;width:55px;height:6px;background:linear-gradient(90deg,#303030,#505050 20%,#202020 40%,#606060 60%,#303030)"></div>
<div class="a" style="left:55px;top:692.5px;width:240px;height:6px;background:linear-gradient(90deg,#10182a,#283040 30%,#6a5428 60%,#8a6a2a 80%,#705a30)"></div>
<svg style="left:308px;top:692.5px" width="40" height="6"><path d="M2 6 L6 1 L10 6Z" fill="#3a90d0"/><rect x="17" y="1" width="14" height="5" fill="#606060" opacity="0.6"/></svg>
<div class="a" style="left:1044px;top:692.3px;width:236px;height:6px;background:linear-gradient(90deg,#7a3818,#9a5028 40%,#8a4424 70%,#9a5a3a)"></div>
<div class="a" style="left:1105.7px;top:693px;width:99.3px;height:6px;background:#3c3a38;border-radius:4px 4px 0 0;border:1px solid #807060;border-bottom:0"></div>
<div class="a" style="left:1150px;top:694.5px;width:35px;height:4px;background:#d8d0c8;opacity:.55"></div>
<svg style="left:1189px;top:692.3px" width="17" height="6"><circle cx="8" cy="8" r="7" fill="#e8b020" stroke="#805010" stroke-width="1"/></svg>
<div class="a" style="left:1212px;top:695px;width:18px;height:3px;background:#f0d8c0;opacity:.5"></div>
<div class="a" style="left:1233px;top:692.8px;width:38px;height:6px;background:#3a3636;border-radius:19px 19px 0 0;border:1px solid #a09080;border-bottom:0"></div></div></body></html>
